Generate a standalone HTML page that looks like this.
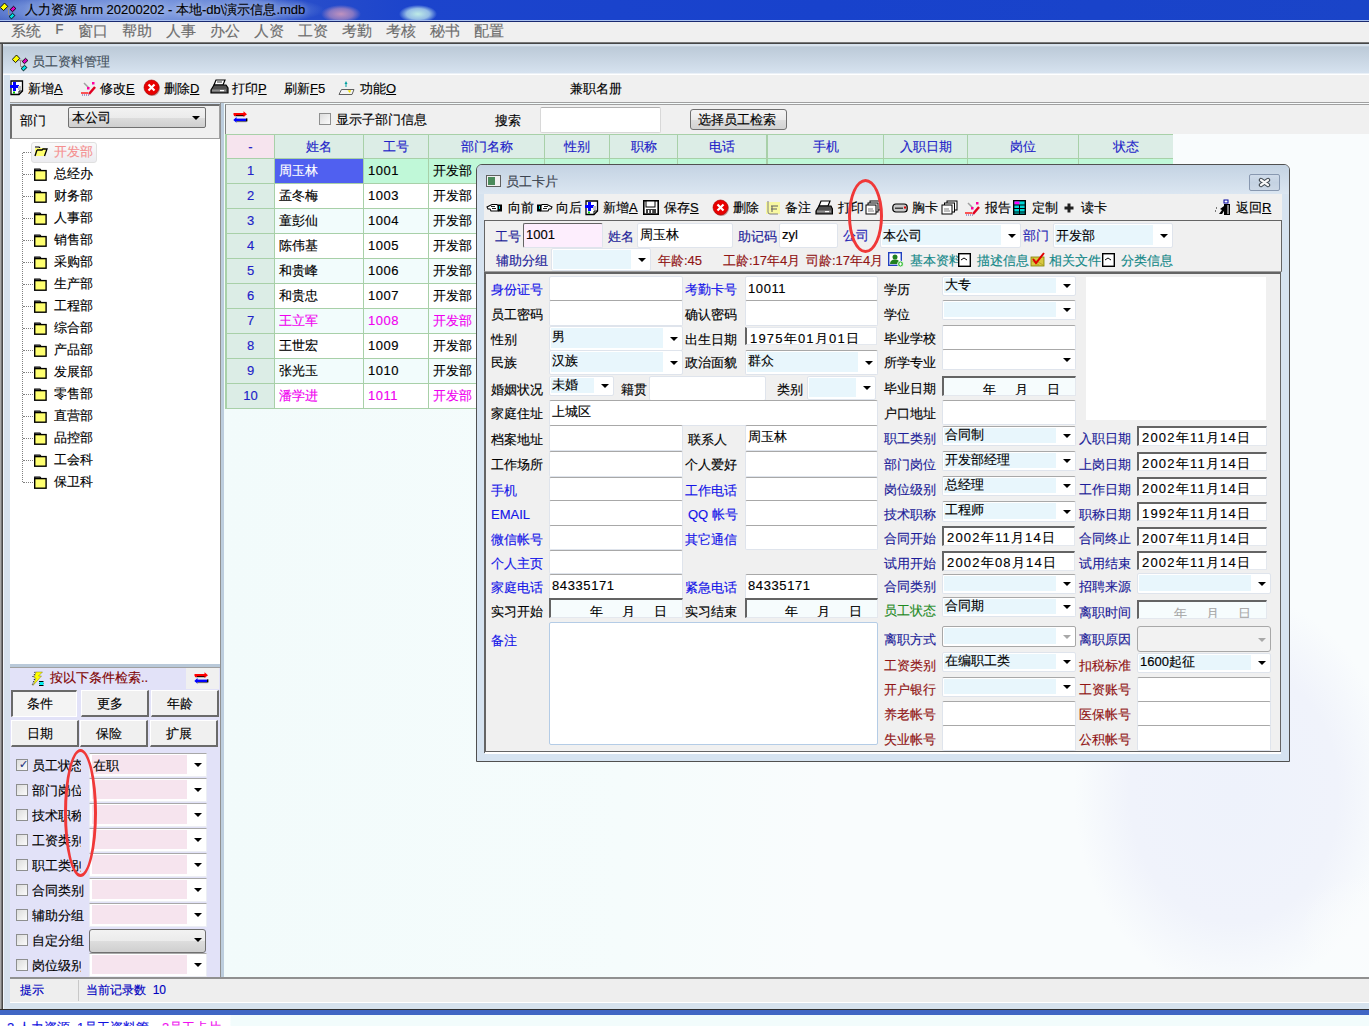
<!DOCTYPE html>
<html><head><meta charset="utf-8">
<style>
*{box-sizing:border-box}
html,body{margin:0;padding:0;width:1369px;height:1026px;overflow:hidden;background:#fff}
body{font-family:"Liberation Sans",sans-serif;font-size:13px;color:#000;position:relative;-webkit-text-stroke:0.15px}
.a{position:absolute}
.t{position:absolute;white-space:nowrap;line-height:1}
#titlebar{left:0;top:0;width:1369px;height:21px;background:radial-gradient(ellipse 20px 9px at 341px 14px,rgba(200,150,190,.95),rgba(200,150,190,.6) 60%,rgba(200,150,190,0)),radial-gradient(ellipse 19px 9px at 418px 14px,rgba(190,235,230,1),rgba(200,240,240,.7) 60%,rgba(200,240,240,0)),radial-gradient(ellipse 175px 20px at 150px 10px,rgba(150,175,230,.9) 0%,rgba(120,150,220,.75) 75%,rgba(60,90,200,0) 100%),linear-gradient(90deg,#4a68c4 0%,#1c44cc 30%,#1842cc 60%,#1a44c8 100%);border-bottom:1px solid #a8c0f0}
#tbdark{left:0;top:21px;width:1369px;height:1px;background:#1a2a70}
#menubar{left:0;top:22px;width:1369px;height:20px;background:#f0f0f0}
#menubar .t{top:1px;font-size:15px;color:#6d6d6d}
#mdiline{left:0;top:42px;width:1369px;height:3px;background:linear-gradient(#a0a0a0,#404040 40%,#505050 70%,#b0b0b0)}
#frame{left:0;top:44px;width:1369px;height:966px;background:linear-gradient(90deg,#a8a8a8 0,#a8a8a8 1px,#787878 1px,#787878 2px,#484848 2px,#484848 3px,#f0f6fc 3px,#f0f6fc 4px,#d6e2ee 4px)}
#childtitle{left:3px;top:45px;width:1366px;height:30px;background:linear-gradient(#e4ecf4 0,#bccad8 2px,#d6e2ef 28px,#ffffff 29px)}
#toolbar{left:10px;top:75px;width:1359px;height:28px;background:#f0f0f0;border-bottom:1px solid #a0a0a0}
#toolbar .t{top:7px;font-size:13px}
u{text-decoration:underline}
#leftpanel{left:10px;top:104px;width:211px;height:872px;background:#fff}
#deptbox{left:10px;top:104px;width:210px;height:35px;background:#f0f0f0;border:1px solid #fff;border-top:2px solid #6e6e6e;border-left:2px solid #6e6e6e;border-bottom:1px solid #a0a0a0;border-right:1px solid #a0a0a0}
.tree .t{font-size:13px;left:54px}
.folder{position:absolute;left:35px;width:12px;height:11px;border:1px solid #000;background:#ffff80;border-top-width:2px}
.dot{position:absolute;border-color:#808080;border-style:dotted;border-width:0}
#splitter{left:220px;top:103px;width:4px;height:874px;background:#bccddd;border-left:1px solid #909090}
#gridpanel{left:224px;top:103px;width:1145px;height:874px;background:radial-gradient(ellipse 70px 60px at 1145px 830px,rgba(250,252,253,1) 0%,rgba(250,252,253,0) 100%),radial-gradient(ellipse 160px 200px at 1010px 690px,#eef2fb 0%,#f0f3fb 65%,rgba(244,247,252,0) 100%),linear-gradient(90deg,#f2fbfb 0px,#f5fcfc 400px,#f9fcfd 600px,#f9fcfd 1145px)}
#gridtool{left:225px;top:104px;width:1144px;height:30px;background:#f0f0f0;border-top:1px solid #a0a0a0;border-left:1px solid #808080}
.grid{position:absolute;border-collapse:collapse;font-size:13px}
#statusbar{left:10px;top:977px;width:1359px;height:26px;background:#eeeeee;border-top:2px solid #909090;border-bottom:1px solid #fff}
#bottomline{left:0;top:1009px;width:1369px;height:6px;background:#4066c4;border-top:1px solid #303030}
#taskarea{left:0;top:1015px;width:1369px;height:11px;background:linear-gradient(90deg,#fff 0,#fff 230px,#f2fcfc 231px)}
</style></head><body>

<div id="titlebar" class="a"></div><div id="tbdark" class="a"></div>
<div class="t" style="left:25px;top:3px;font-size:13px;color:#000;text-shadow:0 0 6px rgba(255,255,255,.6)">人力资源 hrm 20200202 - 本地-db\演示信息.mdb</div>

<svg class="a" style="left:0px;top:0px" width="17" height="20" viewBox="0 0 17 20"><path d="M6.5 8.3 H10.5 M8.5 8.3 V14.5 H10.5" stroke="#9a9080" stroke-width="1" fill="none"/><path d="M4.5 3 L7.8 6.4 L3.5 10.6 L0.3 7.4Z" fill="#ffff00" stroke="#000" stroke-width="0.9"/><path d="M13.5 6.3 L15.9 8.5 L12.5 11.7 L10.2 9.5Z" fill="#e000c0" stroke="#000" stroke-width="0.9"/><path d="M12.5 13.3 L14.9 15.5 L11.5 18.9 L9.1 16.5Z" fill="#00e0e0" stroke="#000" stroke-width="0.9"/></svg>
<div id="menubar" class="a">
<span class="t" style="left:11px">系统</span>
<span class="t" style="left:55px;font-family:'Liberation Mono',monospace">F</span>
<span class="t" style="left:78px">窗口</span>
<span class="t" style="left:122px">帮助</span>
<span class="t" style="left:166px">人事</span>
<span class="t" style="left:210px">办公</span>
<span class="t" style="left:254px">人资</span>
<span class="t" style="left:298px">工资</span>
<span class="t" style="left:342px">考勤</span>
<span class="t" style="left:386px">考核</span>
<span class="t" style="left:430px">秘书</span>
<span class="t" style="left:474px">配置</span>
</div>
<div id="mdiline" class="a"></div>
<div id="frame" class="a"></div>
<div id="childtitle" class="a"></div>
<svg class="a" style="left:12px;top:52px" width="17" height="20" viewBox="0 0 17 20"><path d="M6.5 8.3 H10.5 M8.5 8.3 V14.5 H10.5" stroke="#9a9080" stroke-width="1" fill="none"/><path d="M4.5 3 L7.8 6.4 L3.5 10.6 L0.3 7.4Z" fill="#ffff00" stroke="#000" stroke-width="0.9"/><path d="M13.5 6.3 L15.9 8.5 L12.5 11.7 L10.2 9.5Z" fill="#e000c0" stroke="#000" stroke-width="0.9"/><path d="M12.5 13.3 L14.9 15.5 L11.5 18.9 L9.1 16.5Z" fill="#00e0e0" stroke="#000" stroke-width="0.9"/></svg>
<div class="t" style="left:32px;top:55px;font-size:13px;color:#44505c">员工资料管理</div>

<div id="toolbar" class="a">
<svg class="a" style="margin-left:-10px;margin-top:-75px;left:10px;top:80px" width="14" height="16" viewBox="0 0 14 16"><path d="M1 1 H12.5 V11 L9 14.5 H1Z" fill="#fff" stroke="#000" stroke-width="1.3"/><path d="M12.5 11 H9 V14.5" fill="none" stroke="#000" stroke-width="1"/><path d="M3 2 H6 V5 H9 V8 H6 V11 H3 V8 H0 V5 H3Z" fill="#0000ff"/><rect x="8" y="6" width="3" height="4" fill="#c0c0c0"/><rect x="3" y="11.5" width="2" height="2" fill="#00c000"/></svg>
<svg class="a" style="margin-left:-10px;margin-top:-75px;left:81px;top:81px" width="16" height="15" viewBox="0 0 16 15"><path d="M3 2 L8 7" stroke="#a0a0a0" stroke-width="1.5"/><path d="M14 6 L8 13" stroke="#e00020" stroke-width="2.5"/><rect x="11" y="1" width="2.5" height="2.5" fill="#ff00a0"/><rect x="6" y="6" width="2.5" height="2.5" fill="#ff00a0"/><path d="M0 12 H7" stroke="#ff2020" stroke-width="1.5"/><path d="M1 14 H8" stroke="#6040a0" stroke-width="1" stroke-dasharray="1 1"/></svg>
<svg class="a" style="margin-left:-10px;margin-top:-75px;left:143px;top:79px" width="18" height="18" viewBox="0 0 18 18"><circle cx="9.5" cy="9.5" r="7.5" fill="#700000" opacity=".35"/><circle cx="8.5" cy="8.5" r="7.5" fill="#e80000" stroke="#a00000" stroke-width=".6"/><path d="M5.5 5.5 L11.5 11.5 M11.5 5.5 L5.5 11.5" stroke="#fff" stroke-width="2.2"/></svg>
<svg class="a" style="margin-left:-10px;margin-top:-75px;left:210px;top:79px" width="19" height="17" viewBox="0 0 19 17"><path d="M6 1 H15 L13 6 H4Z" fill="#fff" stroke="#000" stroke-width="1.2"/><path d="M1 11 L4 6 H16 L18 9 V14 H1Z" fill="#505050" stroke="#000" stroke-width="1.2"/><rect x="2" y="10.5" width="14" height="2" fill="#909090"/><rect x="10" y="11" width="4" height="1.2" fill="#fff"/><path d="M7 3 H12" stroke="#000" stroke-width=".8"/></svg>
<svg class="a" style="margin-left:-10px;margin-top:-75px;left:338px;top:80px" width="17" height="16" viewBox="0 0 17 16"><path d="M1 14.5 L3.5 9.5 H16 L14 14.5Z" fill="#f4f4f4" stroke="#606060" stroke-width="1"/><path d="M9.5 10.5 L13 10 L12 13 Z" fill="#f0e000"/><path d="M8 1 L9.5 4 H6.5Z" fill="#00a0a0"/><rect x="7.5" y="4" width="1" height="3" fill="#00a0a0"/></svg>

<span class="t" style="left:18px">新增<u>A</u></span>
<span class="t" style="left:90px">修改<u>E</u></span>
<span class="t" style="left:154px">删除<u>D</u></span>
<span class="t" style="left:222px">打印<u>P</u></span>
<span class="t" style="left:274px">刷新<u>F</u>5</span>
<span class="t" style="left:350px">功能<u>O</u></span>
<span class="t" style="left:560px">兼职名册</span>
</div>

<div id="leftpanel" class="a"></div>
<div id="deptbox" class="a"></div>
<div class="a" style="left:12px;top:106px;width:206px;height:32px;background:#f0f0f0"></div>
<span class="t" style="left:20px;top:114px;font-size:13px">部门</span>
<div class="a" style="left:68px;top:107px;width:138px;height:21px;border:1px solid #707070;border-radius:2px;background:linear-gradient(#f2f2f2,#ebebeb 50%,#dddddd 51%,#cfcfcf)"></div>
<span class="t" style="left:72px;top:111px;font-size:13px">本公司</span>
<div class="a" style="left:192px;top:116px;width:0;height:0;border-left:4px solid transparent;border-right:4px solid transparent;border-top:4px solid #000"></div>
<div class="dot" style="left:22px;top:153px;width:1px;height:329px;border-left-width:1px"></div>
<div class="dot" style="left:23px;top:152px;width:10px;height:1px;border-top-width:1px"></div>
<div class="a" style="left:31px;top:142px;width:66px;height:21px;border:1px solid #e0e0e0;border-radius:3px;background:linear-gradient(#fafafa,#ececf0)"></div>
<svg class="a" style="left:34px;top:146px" width="14" height="11" viewBox="0 0 14 11"><path d="M1 1 H5 L6 2" fill="none" stroke="#000" stroke-width="1.2"/><rect x="1" y="2" width="10" height="8" fill="#ffff70"/><path d="M3 4 H8 L9 3 H13 L10.5 10" fill="#ffff70" stroke="#000" stroke-width="1.3"/><path d="M3 4 L1 10" fill="none" stroke="#000" stroke-width="1.3"/></svg>
<span class="t" style="left:54px;top:145px;font-size:13px;color:#f49090">开发部</span>
<div class="dot" style="left:23px;top:174px;width:10px;height:1px;border-top-width:1px"></div>
<svg class="a" style="left:34px;top:168px" width="13" height="13" viewBox="0 0 13 13"><path d="M0.7 3 V1.2 H6 L7 2.3" fill="#fff" stroke="#000" stroke-width="1.2"/><rect x="0.7" y="2.6" width="11.4" height="9.6" fill="#ffff70" stroke="#000" stroke-width="1.4"/></svg>
<span class="t" style="left:54px;top:167px;font-size:13px">总经办</span>
<div class="dot" style="left:23px;top:196px;width:10px;height:1px;border-top-width:1px"></div>
<svg class="a" style="left:34px;top:190px" width="13" height="13" viewBox="0 0 13 13"><path d="M0.7 3 V1.2 H6 L7 2.3" fill="#fff" stroke="#000" stroke-width="1.2"/><rect x="0.7" y="2.6" width="11.4" height="9.6" fill="#ffff70" stroke="#000" stroke-width="1.4"/></svg>
<span class="t" style="left:54px;top:189px;font-size:13px">财务部</span>
<div class="dot" style="left:23px;top:218px;width:10px;height:1px;border-top-width:1px"></div>
<svg class="a" style="left:34px;top:212px" width="13" height="13" viewBox="0 0 13 13"><path d="M0.7 3 V1.2 H6 L7 2.3" fill="#fff" stroke="#000" stroke-width="1.2"/><rect x="0.7" y="2.6" width="11.4" height="9.6" fill="#ffff70" stroke="#000" stroke-width="1.4"/></svg>
<span class="t" style="left:54px;top:211px;font-size:13px">人事部</span>
<div class="dot" style="left:23px;top:240px;width:10px;height:1px;border-top-width:1px"></div>
<svg class="a" style="left:34px;top:234px" width="13" height="13" viewBox="0 0 13 13"><path d="M0.7 3 V1.2 H6 L7 2.3" fill="#fff" stroke="#000" stroke-width="1.2"/><rect x="0.7" y="2.6" width="11.4" height="9.6" fill="#ffff70" stroke="#000" stroke-width="1.4"/></svg>
<span class="t" style="left:54px;top:233px;font-size:13px">销售部</span>
<div class="dot" style="left:23px;top:262px;width:10px;height:1px;border-top-width:1px"></div>
<svg class="a" style="left:34px;top:256px" width="13" height="13" viewBox="0 0 13 13"><path d="M0.7 3 V1.2 H6 L7 2.3" fill="#fff" stroke="#000" stroke-width="1.2"/><rect x="0.7" y="2.6" width="11.4" height="9.6" fill="#ffff70" stroke="#000" stroke-width="1.4"/></svg>
<span class="t" style="left:54px;top:255px;font-size:13px">采购部</span>
<div class="dot" style="left:23px;top:284px;width:10px;height:1px;border-top-width:1px"></div>
<svg class="a" style="left:34px;top:278px" width="13" height="13" viewBox="0 0 13 13"><path d="M0.7 3 V1.2 H6 L7 2.3" fill="#fff" stroke="#000" stroke-width="1.2"/><rect x="0.7" y="2.6" width="11.4" height="9.6" fill="#ffff70" stroke="#000" stroke-width="1.4"/></svg>
<span class="t" style="left:54px;top:277px;font-size:13px">生产部</span>
<div class="dot" style="left:23px;top:306px;width:10px;height:1px;border-top-width:1px"></div>
<svg class="a" style="left:34px;top:300px" width="13" height="13" viewBox="0 0 13 13"><path d="M0.7 3 V1.2 H6 L7 2.3" fill="#fff" stroke="#000" stroke-width="1.2"/><rect x="0.7" y="2.6" width="11.4" height="9.6" fill="#ffff70" stroke="#000" stroke-width="1.4"/></svg>
<span class="t" style="left:54px;top:299px;font-size:13px">工程部</span>
<div class="dot" style="left:23px;top:328px;width:10px;height:1px;border-top-width:1px"></div>
<svg class="a" style="left:34px;top:322px" width="13" height="13" viewBox="0 0 13 13"><path d="M0.7 3 V1.2 H6 L7 2.3" fill="#fff" stroke="#000" stroke-width="1.2"/><rect x="0.7" y="2.6" width="11.4" height="9.6" fill="#ffff70" stroke="#000" stroke-width="1.4"/></svg>
<span class="t" style="left:54px;top:321px;font-size:13px">综合部</span>
<div class="dot" style="left:23px;top:350px;width:10px;height:1px;border-top-width:1px"></div>
<svg class="a" style="left:34px;top:344px" width="13" height="13" viewBox="0 0 13 13"><path d="M0.7 3 V1.2 H6 L7 2.3" fill="#fff" stroke="#000" stroke-width="1.2"/><rect x="0.7" y="2.6" width="11.4" height="9.6" fill="#ffff70" stroke="#000" stroke-width="1.4"/></svg>
<span class="t" style="left:54px;top:343px;font-size:13px">产品部</span>
<div class="dot" style="left:23px;top:372px;width:10px;height:1px;border-top-width:1px"></div>
<svg class="a" style="left:34px;top:366px" width="13" height="13" viewBox="0 0 13 13"><path d="M0.7 3 V1.2 H6 L7 2.3" fill="#fff" stroke="#000" stroke-width="1.2"/><rect x="0.7" y="2.6" width="11.4" height="9.6" fill="#ffff70" stroke="#000" stroke-width="1.4"/></svg>
<span class="t" style="left:54px;top:365px;font-size:13px">发展部</span>
<div class="dot" style="left:23px;top:394px;width:10px;height:1px;border-top-width:1px"></div>
<svg class="a" style="left:34px;top:388px" width="13" height="13" viewBox="0 0 13 13"><path d="M0.7 3 V1.2 H6 L7 2.3" fill="#fff" stroke="#000" stroke-width="1.2"/><rect x="0.7" y="2.6" width="11.4" height="9.6" fill="#ffff70" stroke="#000" stroke-width="1.4"/></svg>
<span class="t" style="left:54px;top:387px;font-size:13px">零售部</span>
<div class="dot" style="left:23px;top:416px;width:10px;height:1px;border-top-width:1px"></div>
<svg class="a" style="left:34px;top:410px" width="13" height="13" viewBox="0 0 13 13"><path d="M0.7 3 V1.2 H6 L7 2.3" fill="#fff" stroke="#000" stroke-width="1.2"/><rect x="0.7" y="2.6" width="11.4" height="9.6" fill="#ffff70" stroke="#000" stroke-width="1.4"/></svg>
<span class="t" style="left:54px;top:409px;font-size:13px">直营部</span>
<div class="dot" style="left:23px;top:438px;width:10px;height:1px;border-top-width:1px"></div>
<svg class="a" style="left:34px;top:432px" width="13" height="13" viewBox="0 0 13 13"><path d="M0.7 3 V1.2 H6 L7 2.3" fill="#fff" stroke="#000" stroke-width="1.2"/><rect x="0.7" y="2.6" width="11.4" height="9.6" fill="#ffff70" stroke="#000" stroke-width="1.4"/></svg>
<span class="t" style="left:54px;top:431px;font-size:13px">品控部</span>
<div class="dot" style="left:23px;top:460px;width:10px;height:1px;border-top-width:1px"></div>
<svg class="a" style="left:34px;top:454px" width="13" height="13" viewBox="0 0 13 13"><path d="M0.7 3 V1.2 H6 L7 2.3" fill="#fff" stroke="#000" stroke-width="1.2"/><rect x="0.7" y="2.6" width="11.4" height="9.6" fill="#ffff70" stroke="#000" stroke-width="1.4"/></svg>
<span class="t" style="left:54px;top:453px;font-size:13px">工会科</span>
<div class="dot" style="left:23px;top:482px;width:10px;height:1px;border-top-width:1px"></div>
<svg class="a" style="left:34px;top:476px" width="13" height="13" viewBox="0 0 13 13"><path d="M0.7 3 V1.2 H6 L7 2.3" fill="#fff" stroke="#000" stroke-width="1.2"/><rect x="0.7" y="2.6" width="11.4" height="9.6" fill="#ffff70" stroke="#000" stroke-width="1.4"/></svg>
<span class="t" style="left:54px;top:475px;font-size:13px">保卫科</span>
<div class="a" style="left:10px;top:664px;width:210px;height:4px;background:#b9c9d9"></div>
<div class="a" style="left:10px;top:667px;width:210px;height:310px;background:#e2e2f8;border-top:1px solid #a0a0a0"></div>
<div class="a" style="left:186px;top:668px;width:33px;height:21px;background:#f0f0f0"></div>
<span class="t" style="left:50px;top:671px;font-size:13px;color:#800000">按以下条件检索..</span>
<svg class="a" style="left:31px;top:671px" width="14" height="16" viewBox="0 0 14 16"><path d="M5 1 H11.5 L7.5 5 L10.5 5 L2 14.5 L5 7 L3 7Z" fill="#ffff00" stroke="#606000" stroke-width=".4"/><path d="M4 0.8 L3 5 M1.5 5.5 H4 M3.5 8 L1 14.5" stroke="#000" stroke-width="1" stroke-dasharray="1 1.5"/><path d="M8 10.5 H12.5 M8 12.5 H12.5" stroke="#000" stroke-width="1"/><rect x="8.5" y="11" width="4" height="3.5" fill="#00f0f0"/><path d="M8 14.5 H12.5" stroke="#000" stroke-width="1"/></svg>
<svg class="a" style="left:194px;top:672px" width="15" height="12" viewBox="0 0 15 12"><rect x="1.5" y="4" width="10" height="1.2" fill="#000"/><rect x="0.5" y="2" width="11" height="2.2" fill="#ff0000"/><path d="M10.5 0.3 L14 3.2 L10.5 6Z" fill="#ff0000"/><rect x="1" y="2" width="2" height="3" fill="#ff0000"/><rect x="3" y="7.6" width="10.5" height="2.6" fill="#0000ff"/><path d="M0.3 8.9 L3.5 6 V11.8Z" fill="#0000ff"/><rect x="13" y="7.4" width="1.4" height="3" fill="#000"/><rect x="3.5" y="10.2" width="10" height="0.9" fill="#555"/></svg>
<div class="a" style="left:11px;top:690px;width:66px;height:27px;background:#f4f4f4;border-top:2px solid #6a6a6a;border-left:2px solid #6a6a6a;border-bottom:1px solid #fff;border-right:1px solid #fff"></div>
<span class="t" style="left:6px;top:697px;width:68px;text-align:center;font-size:13px">条件</span>
<div class="a" style="left:81px;top:690px;width:68px;height:27px;background:#f0f0f0;border-top:1px solid #fff;border-left:1px solid #fff;border-bottom:2px solid #6a6a6a;border-right:2px solid #6a6a6a"></div>
<span class="t" style="left:76px;top:697px;width:68px;text-align:center;font-size:13px">更多</span>
<div class="a" style="left:151px;top:690px;width:68px;height:27px;background:#f0f0f0;border-top:1px solid #fff;border-left:1px solid #fff;border-bottom:2px solid #6a6a6a;border-right:2px solid #6a6a6a"></div>
<span class="t" style="left:146px;top:697px;width:68px;text-align:center;font-size:13px">年龄</span>
<div class="a" style="left:11px;top:720px;width:68px;height:27px;background:#f0f0f0;border-top:1px solid #fff;border-left:1px solid #fff;border-bottom:2px solid #6a6a6a;border-right:2px solid #6a6a6a"></div>
<span class="t" style="left:6px;top:727px;width:68px;text-align:center;font-size:13px">日期</span>
<div class="a" style="left:80px;top:720px;width:68px;height:27px;background:#f0f0f0;border-top:1px solid #fff;border-left:1px solid #fff;border-bottom:2px solid #6a6a6a;border-right:2px solid #6a6a6a"></div>
<span class="t" style="left:75px;top:727px;width:68px;text-align:center;font-size:13px">保险</span>
<div class="a" style="left:150px;top:720px;width:68px;height:27px;background:#f0f0f0;border-top:1px solid #fff;border-left:1px solid #fff;border-bottom:2px solid #6a6a6a;border-right:2px solid #6a6a6a"></div>
<span class="t" style="left:145px;top:727px;width:68px;text-align:center;font-size:13px">扩展</span>
<div class="a" style="left:16px;top:759px;width:12px;height:12px;border:1px solid #8e8f8f;background:linear-gradient(135deg,#dcdcdc,#fbfbfb)"><span class="t" style="left:2px;top:-1px;font-size:11px;color:#203080">✓</span></div>
<span class="t" style="left:32px;top:759px;font-size:13px;width:49px;overflow:hidden">员工状态</span>
<div class="a" style="left:89px;top:753px;width:118px;height:24px;background:#fff;border:1px solid #eceef4;border-top-color:#a8a8a8"></div>
<div class="a" style="left:92px;top:755px;width:95px;height:19px;background:#f6e4ee"></div>
<div class="a" style="left:194px;top:763px;width:0;height:0;border-left:4px solid transparent;border-right:4px solid transparent;border-top:4px solid #000"></div>
<span class="t" style="left:93px;top:759px;font-size:13px">在职</span>
<div class="a" style="left:16px;top:784px;width:12px;height:12px;border:1px solid #8e8f8f;background:linear-gradient(135deg,#dcdcdc,#fbfbfb)"></div>
<span class="t" style="left:32px;top:784px;font-size:13px;width:49px;overflow:hidden">部门岗位</span>
<div class="a" style="left:89px;top:778px;width:118px;height:24px;background:#fff;border:1px solid #eceef4;border-top-color:#a8a8a8"></div>
<div class="a" style="left:92px;top:780px;width:95px;height:19px;background:#f6e4ee"></div>
<div class="a" style="left:194px;top:788px;width:0;height:0;border-left:4px solid transparent;border-right:4px solid transparent;border-top:4px solid #000"></div>
<div class="a" style="left:16px;top:809px;width:12px;height:12px;border:1px solid #8e8f8f;background:linear-gradient(135deg,#dcdcdc,#fbfbfb)"></div>
<span class="t" style="left:32px;top:809px;font-size:13px;width:49px;overflow:hidden">技术职称</span>
<div class="a" style="left:89px;top:803px;width:118px;height:24px;background:#fff;border:1px solid #eceef4;border-top-color:#a8a8a8"></div>
<div class="a" style="left:92px;top:805px;width:95px;height:19px;background:#f6e4ee"></div>
<div class="a" style="left:194px;top:813px;width:0;height:0;border-left:4px solid transparent;border-right:4px solid transparent;border-top:4px solid #000"></div>
<div class="a" style="left:16px;top:834px;width:12px;height:12px;border:1px solid #8e8f8f;background:linear-gradient(135deg,#dcdcdc,#fbfbfb)"></div>
<span class="t" style="left:32px;top:834px;font-size:13px;width:49px;overflow:hidden">工资类别</span>
<div class="a" style="left:89px;top:828px;width:118px;height:24px;background:#fff;border:1px solid #eceef4;border-top-color:#a8a8a8"></div>
<div class="a" style="left:92px;top:830px;width:95px;height:19px;background:#f6e4ee"></div>
<div class="a" style="left:194px;top:838px;width:0;height:0;border-left:4px solid transparent;border-right:4px solid transparent;border-top:4px solid #000"></div>
<div class="a" style="left:16px;top:859px;width:12px;height:12px;border:1px solid #8e8f8f;background:linear-gradient(135deg,#dcdcdc,#fbfbfb)"></div>
<span class="t" style="left:32px;top:859px;font-size:13px;width:49px;overflow:hidden">职工类别</span>
<div class="a" style="left:89px;top:853px;width:118px;height:24px;background:#fff;border:1px solid #eceef4;border-top-color:#a8a8a8"></div>
<div class="a" style="left:92px;top:855px;width:95px;height:19px;background:#f6e4ee"></div>
<div class="a" style="left:194px;top:863px;width:0;height:0;border-left:4px solid transparent;border-right:4px solid transparent;border-top:4px solid #000"></div>
<div class="a" style="left:16px;top:884px;width:12px;height:12px;border:1px solid #8e8f8f;background:linear-gradient(135deg,#dcdcdc,#fbfbfb)"></div>
<span class="t" style="left:32px;top:884px;font-size:13px;width:56px;overflow:hidden">合同类别</span>
<div class="a" style="left:89px;top:878px;width:118px;height:24px;background:#fff;border:1px solid #eceef4;border-top-color:#a8a8a8"></div>
<div class="a" style="left:92px;top:880px;width:95px;height:19px;background:#f6e4ee"></div>
<div class="a" style="left:194px;top:888px;width:0;height:0;border-left:4px solid transparent;border-right:4px solid transparent;border-top:4px solid #000"></div>
<div class="a" style="left:16px;top:909px;width:12px;height:12px;border:1px solid #8e8f8f;background:linear-gradient(135deg,#dcdcdc,#fbfbfb)"></div>
<span class="t" style="left:32px;top:909px;font-size:13px;width:56px;overflow:hidden">辅助分组</span>
<div class="a" style="left:89px;top:903px;width:118px;height:24px;background:#fff;border:1px solid #eceef4;border-top-color:#a8a8a8"></div>
<div class="a" style="left:92px;top:905px;width:95px;height:19px;background:#f6e4ee"></div>
<div class="a" style="left:194px;top:913px;width:0;height:0;border-left:4px solid transparent;border-right:4px solid transparent;border-top:4px solid #000"></div>
<div class="a" style="left:16px;top:934px;width:12px;height:12px;border:1px solid #8e8f8f;background:linear-gradient(135deg,#dcdcdc,#fbfbfb)"></div>
<span class="t" style="left:32px;top:934px;font-size:13px;width:56px;overflow:hidden">自定分组</span>
<div class="a" style="left:89px;top:929px;width:117px;height:24px;border:1px solid #707070;border-radius:3px;background:linear-gradient(#f2f2f2,#ebebeb 50%,#dddddd 51%,#cfcfcf)"></div>
<div class="a" style="left:194px;top:938px;width:0;height:0;border-left:4px solid transparent;border-right:4px solid transparent;border-top:4px solid #000"></div>
<div class="a" style="left:16px;top:959px;width:12px;height:12px;border:1px solid #8e8f8f;background:linear-gradient(135deg,#dcdcdc,#fbfbfb)"></div>
<span class="t" style="left:32px;top:959px;font-size:13px;width:49px;overflow:hidden">岗位级别</span>
<div class="a" style="left:89px;top:953px;width:118px;height:24px;background:#fff;border:1px solid #eceef4;border-top-color:#a8a8a8"></div>
<div class="a" style="left:92px;top:955px;width:95px;height:19px;background:#f6e4ee"></div>
<div class="a" style="left:194px;top:963px;width:0;height:0;border-left:4px solid transparent;border-right:4px solid transparent;border-top:4px solid #000"></div>

<div id="splitter" class="a"></div>
<div id="gridpanel" class="a"></div>
<div id="gridtool" class="a"></div>

<svg class="a" style="left:233px;top:111px" width="15" height="12" viewBox="0 0 15 12"><rect x="1.5" y="4" width="10" height="1.2" fill="#000"/><rect x="0.5" y="2" width="11" height="2.2" fill="#ff0000"/><path d="M10.5 0.3 L14 3.2 L10.5 6Z" fill="#ff0000"/><rect x="1" y="2" width="2" height="3" fill="#ff0000"/><rect x="3" y="7.6" width="10.5" height="2.6" fill="#0000ff"/><path d="M0.3 8.9 L3.5 6 V11.8Z" fill="#0000ff"/><rect x="13" y="7.4" width="1.4" height="3" fill="#000"/><rect x="3.5" y="10.2" width="10" height="0.9" fill="#555"/></svg>
<div class="a" style="left:319px;top:113px;width:12px;height:12px;border:1px solid #8e8f8f;background:linear-gradient(135deg,#dcdcdc,#fbfbfb)"></div>
<span class="t" style="left:336px;top:113px;font-size:13px">显示子部门信息</span>
<span class="t" style="left:495px;top:114px;font-size:13px">搜索</span>
<div class="a" style="left:540px;top:107px;width:121px;height:26px;background:#fff;border:1px solid #d8d8d8;border-top-color:#b0b0b0;border-radius:2px"></div>
<div class="a" style="left:690px;top:109px;width:97px;height:21px;border:1px solid #707070;border-radius:3px;background:linear-gradient(#f4f4f4,#ebebeb 50%,#dedede 51%,#d2d2d2)"></div>
<span class="t" style="left:698px;top:113px;font-size:13px">选择员工检索</span>
<div class="a" style="left:225px;top:134px;width:948px;height:275px;background:#a8d0a8"></div>
<div class="a" style="left:227px;top:135px;width:47px;height:23px;background:#f6e4ee;color:#2222c8;text-align:center;line-height:23px;font-size:13px">-</div>
<div class="a" style="left:275px;top:135px;width:88px;height:23px;background:#dcede6;color:#2222c8;text-align:center;line-height:23px;font-size:13px">姓名</div>
<div class="a" style="left:364px;top:135px;width:64px;height:23px;background:#dcede6;color:#2222c8;text-align:center;line-height:23px;font-size:13px">工号</div>
<div class="a" style="left:429px;top:135px;width:115px;height:23px;background:#dcede6;color:#2222c8;text-align:center;line-height:23px;font-size:13px">部门名称</div>
<div class="a" style="left:545px;top:135px;width:64px;height:23px;background:#dcede6;color:#2222c8;text-align:center;line-height:23px;font-size:13px">性别</div>
<div class="a" style="left:610px;top:135px;width:67px;height:23px;background:#dcede6;color:#2222c8;text-align:center;line-height:23px;font-size:13px">职称</div>
<div class="a" style="left:678px;top:135px;width:88px;height:23px;background:#dcede6;color:#2222c8;text-align:center;line-height:23px;font-size:13px">电话</div>
<div class="a" style="left:768px;top:135px;width:115px;height:23px;background:#dcede6;color:#2222c8;text-align:center;line-height:23px;font-size:13px">手机</div>
<div class="a" style="left:884px;top:135px;width:83px;height:23px;background:#dcede6;color:#2222c8;text-align:center;line-height:23px;font-size:13px">入职日期</div>
<div class="a" style="left:968px;top:135px;width:110px;height:23px;background:#dcede6;color:#2222c8;text-align:center;line-height:23px;font-size:13px">岗位</div>
<div class="a" style="left:1079px;top:135px;width:94px;height:23px;background:#dcede6;color:#2222c8;text-align:center;line-height:23px;font-size:13px">状态</div>
<div class="a" style="left:227px;top:159px;width:47px;height:24px;background:#dcede6;color:#2222c8;text-align:center;padding-left:0px;line-height:24px;font-size:13px;overflow:hidden;white-space:nowrap">1</div>
<div class="a" style="left:275px;top:159px;width:88px;height:24px;background:#5060f0;color:#fff;text-align:left;padding-left:4px;line-height:24px;font-size:13px;overflow:hidden;white-space:nowrap">周玉林</div>
<div class="a" style="left:364px;top:159px;width:64px;height:24px;background:#c0f8d8;color:#000;text-align:left;padding-left:4px;line-height:24px;font-size:13px;overflow:hidden;white-space:nowrap"><span style="letter-spacing:0.5px">1001</span></div>
<div class="a" style="left:429px;top:159px;width:115px;height:24px;background:#c0f8d8;color:#000;text-align:left;padding-left:4px;line-height:24px;font-size:13px;overflow:hidden;white-space:nowrap">开发部</div>
<div class="a" style="left:545px;top:159px;width:64px;height:24px;background:#c0f8d8;color:#000;text-align:left;padding-left:4px;line-height:24px;font-size:13px;overflow:hidden;white-space:nowrap"></div>
<div class="a" style="left:610px;top:159px;width:67px;height:24px;background:#c0f8d8;color:#000;text-align:left;padding-left:4px;line-height:24px;font-size:13px;overflow:hidden;white-space:nowrap"></div>
<div class="a" style="left:678px;top:159px;width:88px;height:24px;background:#c0f8d8;color:#000;text-align:left;padding-left:4px;line-height:24px;font-size:13px;overflow:hidden;white-space:nowrap"></div>
<div class="a" style="left:768px;top:159px;width:115px;height:24px;background:#c0f8d8;color:#000;text-align:left;padding-left:4px;line-height:24px;font-size:13px;overflow:hidden;white-space:nowrap"></div>
<div class="a" style="left:884px;top:159px;width:83px;height:24px;background:#c0f8d8;color:#000;text-align:left;padding-left:4px;line-height:24px;font-size:13px;overflow:hidden;white-space:nowrap"></div>
<div class="a" style="left:968px;top:159px;width:110px;height:24px;background:#c0f8d8;color:#000;text-align:left;padding-left:4px;line-height:24px;font-size:13px;overflow:hidden;white-space:nowrap"></div>
<div class="a" style="left:1079px;top:159px;width:94px;height:24px;background:#c0f8d8;color:#000;text-align:left;padding-left:4px;line-height:24px;font-size:13px;overflow:hidden;white-space:nowrap"></div>
<div class="a" style="left:227px;top:184px;width:47px;height:24px;background:#dcede6;color:#2222c8;text-align:center;padding-left:0px;line-height:24px;font-size:13px;overflow:hidden;white-space:nowrap">2</div>
<div class="a" style="left:275px;top:184px;width:88px;height:24px;background:#ffffff;color:#000;text-align:left;padding-left:4px;line-height:24px;font-size:13px;overflow:hidden;white-space:nowrap">孟冬梅</div>
<div class="a" style="left:364px;top:184px;width:64px;height:24px;background:#ffffff;color:#000;text-align:left;padding-left:4px;line-height:24px;font-size:13px;overflow:hidden;white-space:nowrap"><span style="letter-spacing:0.5px">1003</span></div>
<div class="a" style="left:429px;top:184px;width:115px;height:24px;background:#ffffff;color:#000;text-align:left;padding-left:4px;line-height:24px;font-size:13px;overflow:hidden;white-space:nowrap">开发部</div>
<div class="a" style="left:545px;top:184px;width:64px;height:24px;background:#ffffff;color:#000;text-align:left;padding-left:4px;line-height:24px;font-size:13px;overflow:hidden;white-space:nowrap"></div>
<div class="a" style="left:610px;top:184px;width:67px;height:24px;background:#ffffff;color:#000;text-align:left;padding-left:4px;line-height:24px;font-size:13px;overflow:hidden;white-space:nowrap"></div>
<div class="a" style="left:678px;top:184px;width:88px;height:24px;background:#ffffff;color:#000;text-align:left;padding-left:4px;line-height:24px;font-size:13px;overflow:hidden;white-space:nowrap"></div>
<div class="a" style="left:768px;top:184px;width:115px;height:24px;background:#ffffff;color:#000;text-align:left;padding-left:4px;line-height:24px;font-size:13px;overflow:hidden;white-space:nowrap"></div>
<div class="a" style="left:884px;top:184px;width:83px;height:24px;background:#ffffff;color:#000;text-align:left;padding-left:4px;line-height:24px;font-size:13px;overflow:hidden;white-space:nowrap"></div>
<div class="a" style="left:968px;top:184px;width:110px;height:24px;background:#ffffff;color:#000;text-align:left;padding-left:4px;line-height:24px;font-size:13px;overflow:hidden;white-space:nowrap"></div>
<div class="a" style="left:1079px;top:184px;width:94px;height:24px;background:#ffffff;color:#000;text-align:left;padding-left:4px;line-height:24px;font-size:13px;overflow:hidden;white-space:nowrap"></div>
<div class="a" style="left:227px;top:209px;width:47px;height:24px;background:#dcede6;color:#2222c8;text-align:center;padding-left:0px;line-height:24px;font-size:13px;overflow:hidden;white-space:nowrap">3</div>
<div class="a" style="left:275px;top:209px;width:88px;height:24px;background:#f2fcfc;color:#000;text-align:left;padding-left:4px;line-height:24px;font-size:13px;overflow:hidden;white-space:nowrap">童彭仙</div>
<div class="a" style="left:364px;top:209px;width:64px;height:24px;background:#f2fcfc;color:#000;text-align:left;padding-left:4px;line-height:24px;font-size:13px;overflow:hidden;white-space:nowrap"><span style="letter-spacing:0.5px">1004</span></div>
<div class="a" style="left:429px;top:209px;width:115px;height:24px;background:#f2fcfc;color:#000;text-align:left;padding-left:4px;line-height:24px;font-size:13px;overflow:hidden;white-space:nowrap">开发部</div>
<div class="a" style="left:545px;top:209px;width:64px;height:24px;background:#f2fcfc;color:#000;text-align:left;padding-left:4px;line-height:24px;font-size:13px;overflow:hidden;white-space:nowrap"></div>
<div class="a" style="left:610px;top:209px;width:67px;height:24px;background:#f2fcfc;color:#000;text-align:left;padding-left:4px;line-height:24px;font-size:13px;overflow:hidden;white-space:nowrap"></div>
<div class="a" style="left:678px;top:209px;width:88px;height:24px;background:#f2fcfc;color:#000;text-align:left;padding-left:4px;line-height:24px;font-size:13px;overflow:hidden;white-space:nowrap"></div>
<div class="a" style="left:768px;top:209px;width:115px;height:24px;background:#f2fcfc;color:#000;text-align:left;padding-left:4px;line-height:24px;font-size:13px;overflow:hidden;white-space:nowrap"></div>
<div class="a" style="left:884px;top:209px;width:83px;height:24px;background:#f2fcfc;color:#000;text-align:left;padding-left:4px;line-height:24px;font-size:13px;overflow:hidden;white-space:nowrap"></div>
<div class="a" style="left:968px;top:209px;width:110px;height:24px;background:#f2fcfc;color:#000;text-align:left;padding-left:4px;line-height:24px;font-size:13px;overflow:hidden;white-space:nowrap"></div>
<div class="a" style="left:1079px;top:209px;width:94px;height:24px;background:#f2fcfc;color:#000;text-align:left;padding-left:4px;line-height:24px;font-size:13px;overflow:hidden;white-space:nowrap"></div>
<div class="a" style="left:227px;top:234px;width:47px;height:24px;background:#dcede6;color:#2222c8;text-align:center;padding-left:0px;line-height:24px;font-size:13px;overflow:hidden;white-space:nowrap">4</div>
<div class="a" style="left:275px;top:234px;width:88px;height:24px;background:#ffffff;color:#000;text-align:left;padding-left:4px;line-height:24px;font-size:13px;overflow:hidden;white-space:nowrap">陈伟基</div>
<div class="a" style="left:364px;top:234px;width:64px;height:24px;background:#ffffff;color:#000;text-align:left;padding-left:4px;line-height:24px;font-size:13px;overflow:hidden;white-space:nowrap"><span style="letter-spacing:0.5px">1005</span></div>
<div class="a" style="left:429px;top:234px;width:115px;height:24px;background:#ffffff;color:#000;text-align:left;padding-left:4px;line-height:24px;font-size:13px;overflow:hidden;white-space:nowrap">开发部</div>
<div class="a" style="left:545px;top:234px;width:64px;height:24px;background:#ffffff;color:#000;text-align:left;padding-left:4px;line-height:24px;font-size:13px;overflow:hidden;white-space:nowrap"></div>
<div class="a" style="left:610px;top:234px;width:67px;height:24px;background:#ffffff;color:#000;text-align:left;padding-left:4px;line-height:24px;font-size:13px;overflow:hidden;white-space:nowrap"></div>
<div class="a" style="left:678px;top:234px;width:88px;height:24px;background:#ffffff;color:#000;text-align:left;padding-left:4px;line-height:24px;font-size:13px;overflow:hidden;white-space:nowrap"></div>
<div class="a" style="left:768px;top:234px;width:115px;height:24px;background:#ffffff;color:#000;text-align:left;padding-left:4px;line-height:24px;font-size:13px;overflow:hidden;white-space:nowrap"></div>
<div class="a" style="left:884px;top:234px;width:83px;height:24px;background:#ffffff;color:#000;text-align:left;padding-left:4px;line-height:24px;font-size:13px;overflow:hidden;white-space:nowrap"></div>
<div class="a" style="left:968px;top:234px;width:110px;height:24px;background:#ffffff;color:#000;text-align:left;padding-left:4px;line-height:24px;font-size:13px;overflow:hidden;white-space:nowrap"></div>
<div class="a" style="left:1079px;top:234px;width:94px;height:24px;background:#ffffff;color:#000;text-align:left;padding-left:4px;line-height:24px;font-size:13px;overflow:hidden;white-space:nowrap"></div>
<div class="a" style="left:227px;top:259px;width:47px;height:24px;background:#dcede6;color:#2222c8;text-align:center;padding-left:0px;line-height:24px;font-size:13px;overflow:hidden;white-space:nowrap">5</div>
<div class="a" style="left:275px;top:259px;width:88px;height:24px;background:#f2fcfc;color:#000;text-align:left;padding-left:4px;line-height:24px;font-size:13px;overflow:hidden;white-space:nowrap">和贵峰</div>
<div class="a" style="left:364px;top:259px;width:64px;height:24px;background:#f2fcfc;color:#000;text-align:left;padding-left:4px;line-height:24px;font-size:13px;overflow:hidden;white-space:nowrap"><span style="letter-spacing:0.5px">1006</span></div>
<div class="a" style="left:429px;top:259px;width:115px;height:24px;background:#f2fcfc;color:#000;text-align:left;padding-left:4px;line-height:24px;font-size:13px;overflow:hidden;white-space:nowrap">开发部</div>
<div class="a" style="left:545px;top:259px;width:64px;height:24px;background:#f2fcfc;color:#000;text-align:left;padding-left:4px;line-height:24px;font-size:13px;overflow:hidden;white-space:nowrap"></div>
<div class="a" style="left:610px;top:259px;width:67px;height:24px;background:#f2fcfc;color:#000;text-align:left;padding-left:4px;line-height:24px;font-size:13px;overflow:hidden;white-space:nowrap"></div>
<div class="a" style="left:678px;top:259px;width:88px;height:24px;background:#f2fcfc;color:#000;text-align:left;padding-left:4px;line-height:24px;font-size:13px;overflow:hidden;white-space:nowrap"></div>
<div class="a" style="left:768px;top:259px;width:115px;height:24px;background:#f2fcfc;color:#000;text-align:left;padding-left:4px;line-height:24px;font-size:13px;overflow:hidden;white-space:nowrap"></div>
<div class="a" style="left:884px;top:259px;width:83px;height:24px;background:#f2fcfc;color:#000;text-align:left;padding-left:4px;line-height:24px;font-size:13px;overflow:hidden;white-space:nowrap"></div>
<div class="a" style="left:968px;top:259px;width:110px;height:24px;background:#f2fcfc;color:#000;text-align:left;padding-left:4px;line-height:24px;font-size:13px;overflow:hidden;white-space:nowrap"></div>
<div class="a" style="left:1079px;top:259px;width:94px;height:24px;background:#f2fcfc;color:#000;text-align:left;padding-left:4px;line-height:24px;font-size:13px;overflow:hidden;white-space:nowrap"></div>
<div class="a" style="left:227px;top:284px;width:47px;height:24px;background:#dcede6;color:#2222c8;text-align:center;padding-left:0px;line-height:24px;font-size:13px;overflow:hidden;white-space:nowrap">6</div>
<div class="a" style="left:275px;top:284px;width:88px;height:24px;background:#ffffff;color:#000;text-align:left;padding-left:4px;line-height:24px;font-size:13px;overflow:hidden;white-space:nowrap">和贵忠</div>
<div class="a" style="left:364px;top:284px;width:64px;height:24px;background:#ffffff;color:#000;text-align:left;padding-left:4px;line-height:24px;font-size:13px;overflow:hidden;white-space:nowrap"><span style="letter-spacing:0.5px">1007</span></div>
<div class="a" style="left:429px;top:284px;width:115px;height:24px;background:#ffffff;color:#000;text-align:left;padding-left:4px;line-height:24px;font-size:13px;overflow:hidden;white-space:nowrap">开发部</div>
<div class="a" style="left:545px;top:284px;width:64px;height:24px;background:#ffffff;color:#000;text-align:left;padding-left:4px;line-height:24px;font-size:13px;overflow:hidden;white-space:nowrap"></div>
<div class="a" style="left:610px;top:284px;width:67px;height:24px;background:#ffffff;color:#000;text-align:left;padding-left:4px;line-height:24px;font-size:13px;overflow:hidden;white-space:nowrap"></div>
<div class="a" style="left:678px;top:284px;width:88px;height:24px;background:#ffffff;color:#000;text-align:left;padding-left:4px;line-height:24px;font-size:13px;overflow:hidden;white-space:nowrap"></div>
<div class="a" style="left:768px;top:284px;width:115px;height:24px;background:#ffffff;color:#000;text-align:left;padding-left:4px;line-height:24px;font-size:13px;overflow:hidden;white-space:nowrap"></div>
<div class="a" style="left:884px;top:284px;width:83px;height:24px;background:#ffffff;color:#000;text-align:left;padding-left:4px;line-height:24px;font-size:13px;overflow:hidden;white-space:nowrap"></div>
<div class="a" style="left:968px;top:284px;width:110px;height:24px;background:#ffffff;color:#000;text-align:left;padding-left:4px;line-height:24px;font-size:13px;overflow:hidden;white-space:nowrap"></div>
<div class="a" style="left:1079px;top:284px;width:94px;height:24px;background:#ffffff;color:#000;text-align:left;padding-left:4px;line-height:24px;font-size:13px;overflow:hidden;white-space:nowrap"></div>
<div class="a" style="left:227px;top:309px;width:47px;height:24px;background:#dcede6;color:#2222c8;text-align:center;padding-left:0px;line-height:24px;font-size:13px;overflow:hidden;white-space:nowrap">7</div>
<div class="a" style="left:275px;top:309px;width:88px;height:24px;background:#f2fcfc;color:#f000f0;text-align:left;padding-left:4px;line-height:24px;font-size:13px;overflow:hidden;white-space:nowrap">王立军</div>
<div class="a" style="left:364px;top:309px;width:64px;height:24px;background:#f2fcfc;color:#f000f0;text-align:left;padding-left:4px;line-height:24px;font-size:13px;overflow:hidden;white-space:nowrap"><span style="letter-spacing:0.5px">1008</span></div>
<div class="a" style="left:429px;top:309px;width:115px;height:24px;background:#f2fcfc;color:#f000f0;text-align:left;padding-left:4px;line-height:24px;font-size:13px;overflow:hidden;white-space:nowrap">开发部</div>
<div class="a" style="left:545px;top:309px;width:64px;height:24px;background:#f2fcfc;color:#f000f0;text-align:left;padding-left:4px;line-height:24px;font-size:13px;overflow:hidden;white-space:nowrap"></div>
<div class="a" style="left:610px;top:309px;width:67px;height:24px;background:#f2fcfc;color:#f000f0;text-align:left;padding-left:4px;line-height:24px;font-size:13px;overflow:hidden;white-space:nowrap"></div>
<div class="a" style="left:678px;top:309px;width:88px;height:24px;background:#f2fcfc;color:#f000f0;text-align:left;padding-left:4px;line-height:24px;font-size:13px;overflow:hidden;white-space:nowrap"></div>
<div class="a" style="left:768px;top:309px;width:115px;height:24px;background:#f2fcfc;color:#f000f0;text-align:left;padding-left:4px;line-height:24px;font-size:13px;overflow:hidden;white-space:nowrap"></div>
<div class="a" style="left:884px;top:309px;width:83px;height:24px;background:#f2fcfc;color:#f000f0;text-align:left;padding-left:4px;line-height:24px;font-size:13px;overflow:hidden;white-space:nowrap"></div>
<div class="a" style="left:968px;top:309px;width:110px;height:24px;background:#f2fcfc;color:#f000f0;text-align:left;padding-left:4px;line-height:24px;font-size:13px;overflow:hidden;white-space:nowrap"></div>
<div class="a" style="left:1079px;top:309px;width:94px;height:24px;background:#f2fcfc;color:#f000f0;text-align:left;padding-left:4px;line-height:24px;font-size:13px;overflow:hidden;white-space:nowrap"></div>
<div class="a" style="left:227px;top:334px;width:47px;height:24px;background:#dcede6;color:#2222c8;text-align:center;padding-left:0px;line-height:24px;font-size:13px;overflow:hidden;white-space:nowrap">8</div>
<div class="a" style="left:275px;top:334px;width:88px;height:24px;background:#ffffff;color:#000;text-align:left;padding-left:4px;line-height:24px;font-size:13px;overflow:hidden;white-space:nowrap">王世宏</div>
<div class="a" style="left:364px;top:334px;width:64px;height:24px;background:#ffffff;color:#000;text-align:left;padding-left:4px;line-height:24px;font-size:13px;overflow:hidden;white-space:nowrap"><span style="letter-spacing:0.5px">1009</span></div>
<div class="a" style="left:429px;top:334px;width:115px;height:24px;background:#ffffff;color:#000;text-align:left;padding-left:4px;line-height:24px;font-size:13px;overflow:hidden;white-space:nowrap">开发部</div>
<div class="a" style="left:545px;top:334px;width:64px;height:24px;background:#ffffff;color:#000;text-align:left;padding-left:4px;line-height:24px;font-size:13px;overflow:hidden;white-space:nowrap"></div>
<div class="a" style="left:610px;top:334px;width:67px;height:24px;background:#ffffff;color:#000;text-align:left;padding-left:4px;line-height:24px;font-size:13px;overflow:hidden;white-space:nowrap"></div>
<div class="a" style="left:678px;top:334px;width:88px;height:24px;background:#ffffff;color:#000;text-align:left;padding-left:4px;line-height:24px;font-size:13px;overflow:hidden;white-space:nowrap"></div>
<div class="a" style="left:768px;top:334px;width:115px;height:24px;background:#ffffff;color:#000;text-align:left;padding-left:4px;line-height:24px;font-size:13px;overflow:hidden;white-space:nowrap"></div>
<div class="a" style="left:884px;top:334px;width:83px;height:24px;background:#ffffff;color:#000;text-align:left;padding-left:4px;line-height:24px;font-size:13px;overflow:hidden;white-space:nowrap"></div>
<div class="a" style="left:968px;top:334px;width:110px;height:24px;background:#ffffff;color:#000;text-align:left;padding-left:4px;line-height:24px;font-size:13px;overflow:hidden;white-space:nowrap"></div>
<div class="a" style="left:1079px;top:334px;width:94px;height:24px;background:#ffffff;color:#000;text-align:left;padding-left:4px;line-height:24px;font-size:13px;overflow:hidden;white-space:nowrap"></div>
<div class="a" style="left:227px;top:359px;width:47px;height:24px;background:#dcede6;color:#2222c8;text-align:center;padding-left:0px;line-height:24px;font-size:13px;overflow:hidden;white-space:nowrap">9</div>
<div class="a" style="left:275px;top:359px;width:88px;height:24px;background:#f2fcfc;color:#000;text-align:left;padding-left:4px;line-height:24px;font-size:13px;overflow:hidden;white-space:nowrap">张光玉</div>
<div class="a" style="left:364px;top:359px;width:64px;height:24px;background:#f2fcfc;color:#000;text-align:left;padding-left:4px;line-height:24px;font-size:13px;overflow:hidden;white-space:nowrap"><span style="letter-spacing:0.5px">1010</span></div>
<div class="a" style="left:429px;top:359px;width:115px;height:24px;background:#f2fcfc;color:#000;text-align:left;padding-left:4px;line-height:24px;font-size:13px;overflow:hidden;white-space:nowrap">开发部</div>
<div class="a" style="left:545px;top:359px;width:64px;height:24px;background:#f2fcfc;color:#000;text-align:left;padding-left:4px;line-height:24px;font-size:13px;overflow:hidden;white-space:nowrap"></div>
<div class="a" style="left:610px;top:359px;width:67px;height:24px;background:#f2fcfc;color:#000;text-align:left;padding-left:4px;line-height:24px;font-size:13px;overflow:hidden;white-space:nowrap"></div>
<div class="a" style="left:678px;top:359px;width:88px;height:24px;background:#f2fcfc;color:#000;text-align:left;padding-left:4px;line-height:24px;font-size:13px;overflow:hidden;white-space:nowrap"></div>
<div class="a" style="left:768px;top:359px;width:115px;height:24px;background:#f2fcfc;color:#000;text-align:left;padding-left:4px;line-height:24px;font-size:13px;overflow:hidden;white-space:nowrap"></div>
<div class="a" style="left:884px;top:359px;width:83px;height:24px;background:#f2fcfc;color:#000;text-align:left;padding-left:4px;line-height:24px;font-size:13px;overflow:hidden;white-space:nowrap"></div>
<div class="a" style="left:968px;top:359px;width:110px;height:24px;background:#f2fcfc;color:#000;text-align:left;padding-left:4px;line-height:24px;font-size:13px;overflow:hidden;white-space:nowrap"></div>
<div class="a" style="left:1079px;top:359px;width:94px;height:24px;background:#f2fcfc;color:#000;text-align:left;padding-left:4px;line-height:24px;font-size:13px;overflow:hidden;white-space:nowrap"></div>
<div class="a" style="left:227px;top:384px;width:47px;height:24px;background:#dcede6;color:#2222c8;text-align:center;padding-left:0px;line-height:24px;font-size:13px;overflow:hidden;white-space:nowrap">10</div>
<div class="a" style="left:275px;top:384px;width:88px;height:24px;background:#ffffff;color:#f000f0;text-align:left;padding-left:4px;line-height:24px;font-size:13px;overflow:hidden;white-space:nowrap">潘学进</div>
<div class="a" style="left:364px;top:384px;width:64px;height:24px;background:#ffffff;color:#f000f0;text-align:left;padding-left:4px;line-height:24px;font-size:13px;overflow:hidden;white-space:nowrap"><span style="letter-spacing:0.5px">1011</span></div>
<div class="a" style="left:429px;top:384px;width:115px;height:24px;background:#ffffff;color:#f000f0;text-align:left;padding-left:4px;line-height:24px;font-size:13px;overflow:hidden;white-space:nowrap">开发部</div>
<div class="a" style="left:545px;top:384px;width:64px;height:24px;background:#ffffff;color:#f000f0;text-align:left;padding-left:4px;line-height:24px;font-size:13px;overflow:hidden;white-space:nowrap"></div>
<div class="a" style="left:610px;top:384px;width:67px;height:24px;background:#ffffff;color:#f000f0;text-align:left;padding-left:4px;line-height:24px;font-size:13px;overflow:hidden;white-space:nowrap"></div>
<div class="a" style="left:678px;top:384px;width:88px;height:24px;background:#ffffff;color:#f000f0;text-align:left;padding-left:4px;line-height:24px;font-size:13px;overflow:hidden;white-space:nowrap"></div>
<div class="a" style="left:768px;top:384px;width:115px;height:24px;background:#ffffff;color:#f000f0;text-align:left;padding-left:4px;line-height:24px;font-size:13px;overflow:hidden;white-space:nowrap"></div>
<div class="a" style="left:884px;top:384px;width:83px;height:24px;background:#ffffff;color:#f000f0;text-align:left;padding-left:4px;line-height:24px;font-size:13px;overflow:hidden;white-space:nowrap"></div>
<div class="a" style="left:968px;top:384px;width:110px;height:24px;background:#ffffff;color:#f000f0;text-align:left;padding-left:4px;line-height:24px;font-size:13px;overflow:hidden;white-space:nowrap"></div>
<div class="a" style="left:1079px;top:384px;width:94px;height:24px;background:#ffffff;color:#f000f0;text-align:left;padding-left:4px;line-height:24px;font-size:13px;overflow:hidden;white-space:nowrap"></div>
<div id="statusbar" class="a"></div>
<span class="t" style="left:20px;top:984px;font-size:12px;color:#0000c0">提示</span>
<div class="a" style="left:78px;top:980px;width:1px;height:21px;background:#c8c8c8"></div>
<span class="t" style="left:86px;top:984px;font-size:12px;color:#0000c0">当前记录数&nbsp; 10</span>
<div id="bottomline" class="a"></div>
<div id="taskarea" class="a"></div>
<span class="t" style="left:7px;top:1021px;font-size:13px;color:#1010e0">2.人力资源&nbsp; 1员工资料管</span><span class="t" style="left:162px;top:1021px;font-size:13px;color:#f010f0">3员工卡片</span>

<div class="a" style="left:476px;top:164px;width:814px;height:598px;background:#d6e3f0;border:1px solid #505050;border-radius:6px 6px 0 0"></div>
<div class="a" style="left:477px;top:165px;width:812px;height:29px;background:linear-gradient(#c4d3e3,#dbe6f1);border-radius:5px 5px 0 0"></div>
<div class="a" style="left:486px;top:175px;width:15px;height:12px;border:1px solid #606060;background:#f0f0f0"></div>
<div class="a" style="left:488px;top:177px;width:7px;height:8px;background:#4a8a5a"></div>
<span class="t" style="left:506px;top:175px;font-size:13px;color:#3c4450">员工卡片</span>
<div class="a" style="left:1249px;top:174px;width:31px;height:17px;border:1px solid #8898b0;border-radius:2px;background:linear-gradient(#d0dcea,#c4d2e2 50%,#ccd8e6)"></div>
<svg class="a" style="left:1258px;top:177px" width="13" height="11" viewBox="0 0 13 11"><path d="M3 3 L10 8 M10 3 L3 8" stroke="#404850" stroke-width="4.4" stroke-linecap="round"/><path d="M3 3 L10 8 M10 3 L3 8" stroke="#f8f8f8" stroke-width="2.2" stroke-linecap="round"/></svg>
<div class="a" style="left:484px;top:194px;width:798px;height:26px;background:#f0f0f0"></div>
<span class="t" style="left:508px;top:201px;font-size:13px">向前</span>
<span class="t" style="left:556px;top:201px;font-size:13px">向后</span>
<span class="t" style="left:603px;top:201px;font-size:13px">新增<u>A</u></span>
<span class="t" style="left:664px;top:201px;font-size:13px">保存<u>S</u></span>
<span class="t" style="left:733px;top:201px;font-size:13px">删除</span>
<span class="t" style="left:785px;top:201px;font-size:13px">备注</span>
<span class="t" style="left:838px;top:201px;font-size:13px">打印</span>
<span class="t" style="left:912px;top:201px;font-size:13px">胸卡</span>
<span class="t" style="left:985px;top:201px;font-size:13px">报告</span>
<span class="t" style="left:1032px;top:201px;font-size:13px">定制</span>
<span class="t" style="left:1081px;top:201px;font-size:13px">读卡</span>
<span class="t" style="left:1236px;top:201px;font-size:13px">返回<u>R</u></span>
<svg class="a" style="left:486px;top:203px" width="17" height="10" viewBox="0 0 17 10"><path d="M1 4 L6 1.5 H11 L12 2.5 V8 H5 L4 6 H2 Z" fill="#fff" stroke="#000" stroke-width="1.1"/><path d="M5 3.5 H9 M6 5.5 H10" stroke="#000" stroke-width=".9"/><rect x="12" y="1.5" width="4" height="7" fill="#000"/><rect x="13" y="3" width="1" height="3" fill="#00e0e0"/></svg>
<svg class="a" style="left:536px;top:203px" width="17" height="10" viewBox="0 0 17 10"><path d="M16 4 L11 1.5 H6 L5 2.5 V8 H12 L13 6 H15 Z" fill="#fff" stroke="#000" stroke-width="1.1"/><path d="M12 3.5 H8 M11 5.5 H7" stroke="#000" stroke-width=".9"/><rect x="1" y="1.5" width="4" height="7" fill="#000"/><rect x="3" y="3" width="1" height="3" fill="#00e0e0"/></svg>
<svg class="a" style="left:585px;top:200px" width="14" height="16" viewBox="0 0 14 16"><path d="M1 1 H12.5 V11 L9 14.5 H1Z" fill="#fff" stroke="#000" stroke-width="1.3"/><path d="M12.5 11 H9 V14.5" fill="none" stroke="#000" stroke-width="1"/><path d="M3 2 H6 V5 H9 V8 H6 V11 H3 V8 H0 V5 H3Z" fill="#0000ff"/><rect x="8" y="6" width="3" height="4" fill="#c0c0c0"/><rect x="3" y="11.5" width="2" height="2" fill="#00c000"/></svg>
<svg class="a" style="left:643px;top:200px" width="16" height="15" viewBox="0 0 16 15"><rect x="0.8" y="0.8" width="14.4" height="13.4" fill="#fff" stroke="#000" stroke-width="1.6"/><rect x="3" y="1" width="9" height="6" fill="#fff" stroke="#000" stroke-width="1"/><rect x="3" y="9" width="10" height="5" fill="#404040"/><rect x="5" y="10" width="1.2" height="3" fill="#fff"/><rect x="8" y="10" width="1.2" height="3" fill="#fff"/></svg>
<svg class="a" style="left:712px;top:199px" width="18" height="18" viewBox="0 0 18 18"><circle cx="9.5" cy="9.5" r="7.5" fill="#700000" opacity=".35"/><circle cx="8.5" cy="8.5" r="7.5" fill="#e80000" stroke="#a00000" stroke-width=".6"/><path d="M5.5 5.5 L11.5 11.5 M11.5 5.5 L5.5 11.5" stroke="#fff" stroke-width="2.2"/></svg>
<svg class="a" style="left:765px;top:200px" width="16" height="15" viewBox="0 0 16 15"><rect x="1" y="2" width="14" height="12" fill="#ffff60" opacity=".55"/><path d="M3 1 V12 Q3 14 5 14 H13" fill="none" stroke="#808080" stroke-width="1"/><path d="M6 6 H13 M6 9 H12 M7 6 V12" stroke="#606060" stroke-width="1"/></svg>
<svg class="a" style="left:815px;top:200px" width="18" height="16" viewBox="0 0 18 16"><path d="M6 1 H15 L13 6 H4Z" fill="#fff" stroke="#000" stroke-width="1.2"/><path d="M1 11 L4 6 H16 L17.5 9 V14 H1Z" fill="#505050" stroke="#000" stroke-width="1.2"/><rect x="2" y="10.5" width="14" height="2" fill="#909090"/><rect x="10" y="11" width="4" height="1.2" fill="#fff"/></svg>
<svg class="a" style="left:865px;top:200px" width="16" height="15" viewBox="0 0 16 15"><rect x="5" y="1" width="10" height="9" fill="#fff" stroke="#000"/><rect x="3" y="3" width="10" height="9" fill="#fff" stroke="#000"/><rect x="1" y="5" width="10" height="9" fill="#fff" stroke="#000"/><path d="M3 9 H8 M3 11 H9" stroke="#606060" stroke-width=".8"/></svg>
<svg class="a" style="left:892px;top:203px" width="16" height="10" viewBox="0 0 16 10"><rect x="0.8" y="1" width="14.4" height="8" rx="3" fill="#c8c8c8" stroke="#000" stroke-width="1.2"/><rect x="3" y="4.5" width="8" height="1.5" fill="#404040"/><rect x="12" y="3.5" width="2" height="2" fill="#e00000"/></svg>
<svg class="a" style="left:941px;top:200px" width="17" height="15" viewBox="0 0 17 15"><rect x="6" y="1" width="10" height="9" fill="#fff" stroke="#000"/><rect x="3.5" y="3" width="10" height="9" fill="#fff" stroke="#000"/><rect x="1" y="5" width="10" height="9" fill="#fff" stroke="#000"/><path d="M3 9 H8 M3 11 H9" stroke="#606060" stroke-width=".8"/></svg>
<svg class="a" style="left:965px;top:201px" width="16" height="15" viewBox="0 0 16 15"><path d="M3 2 L8 7" stroke="#a0a0a0" stroke-width="1.5"/><path d="M14 6 L8 13" stroke="#e00020" stroke-width="2.5"/><rect x="11" y="1" width="2.5" height="2.5" fill="#ff00a0"/><rect x="6" y="6" width="2.5" height="2.5" fill="#ff00a0"/><path d="M0 12 H7" stroke="#ff2020" stroke-width="1.5"/><path d="M1 14 H8" stroke="#6040a0" stroke-width="1" stroke-dasharray="1 1"/></svg>
<svg class="a" style="left:1013px;top:200px" width="13" height="15" viewBox="0 0 13 15"><rect x="0.7" y="0.7" width="11.6" height="13.6" fill="#00d8d8" stroke="#000" stroke-width="1.4"/><rect x="1.5" y="1.5" width="5" height="3" fill="#ff00ff"/><path d="M1 5 H12 M1 8.5 H12 M1 12 H12 M6.5 5 V14" stroke="#000" stroke-width="1"/></svg>
<svg class="a" style="left:1064px;top:203px" width="10" height="10" viewBox="0 0 10 10"><path d="M3.5 0.5 H6.5 V3.5 H9.5 V6.5 H6.5 V9.5 H3.5 V6.5 H0.5 V3.5 H3.5Z" fill="#202020"/></svg>
<svg class="a" style="left:1215px;top:199px" width="17" height="17" viewBox="0 0 17 17"><rect x="9" y="1" width="4" height="3" fill="#fff" stroke="#0000a0" stroke-width="1"/><rect x="9" y="5" width="6" height="11" fill="#000"/><rect x="12" y="6" width="2" height="9" fill="#808080"/><path d="M9 7 L5 10 L7 11 L4 15 H7 L9 12" fill="#000"/><path d="M1 9 H3 M0 12 H2" stroke="#000" stroke-width="1" stroke-dasharray="1 1"/></svg>
<div class="a" style="left:484px;top:220px;width:798px;height:52px;background:#f0f0f0;border-top:1px solid #646464;border-left:1px solid #646464;border-right:1px solid #646464;border-bottom:1px solid #a0a0a0"></div>
<div class="a" style="left:484px;top:272px;width:797px;height:481px;background:#f0f0f0;border-top:2px solid #646464;border-left:2px solid #646464;border-bottom:2px solid #646464;border-right:1px solid #646464"></div>
<span class="t" style="left:495px;top:230px;font-size:13px;color:#1c1c98">工号</span>
<div class="a" style="left:523px;top:223px;width:80px;height:25px;background:#fdeefd;border:1px solid #dfe4ec;border-top-color:#646464;border-radius:2px;border-left-color:#646464"></div>
<span class="t" style="left:526px;top:228px;font-size:13px;letter-spacing:0px">1001</span>
<span class="t" style="left:608px;top:230px;font-size:13px;color:#1c1c98">姓名</span>
<div class="a" style="left:637px;top:223px;width:96px;height:25px;background:#fff;border:1px solid #dfe4ec;border-top-color:#dfe4ec;border-radius:2px;"></div>
<span class="t" style="left:640px;top:228px;font-size:13px;letter-spacing:0px">周玉林</span>
<span class="t" style="left:738px;top:230px;font-size:13px;color:#1c1c98">助记码</span>
<div class="a" style="left:779px;top:223px;width:59px;height:25px;background:#fff;border:1px solid #dfe4ec;border-top-color:#dfe4ec;border-radius:2px;"></div>
<span class="t" style="left:782px;top:228px;font-size:13px;letter-spacing:0px">zyl</span>
<span class="t" style="left:843px;top:229px;font-size:13px;color:#2626b4">公司</span>
<div class="a" style="left:880px;top:223px;width:141px;height:25px;background:#fff;border:1px solid #dfe4ec;border-top-color:#dfe4ec;border-radius:2px"></div>
<div class="a" style="left:882px;top:225px;width:119px;height:20px;background:#e8f6fc"></div>
<div class="a" style="left:1008px;top:234px;width:0;height:0;border-left:4px solid transparent;border-right:4px solid transparent;border-top:4px solid #000"></div>
<span class="t" style="left:883px;top:229px;font-size:13px">本公司</span>
<span class="t" style="left:1023px;top:229px;font-size:13px;color:#2626b4">部门</span>
<div class="a" style="left:1053px;top:223px;width:120px;height:25px;background:#fff;border:1px solid #dfe4ec;border-top-color:#dfe4ec;border-radius:2px"></div>
<div class="a" style="left:1055px;top:225px;width:98px;height:20px;background:#e8f6fc"></div>
<div class="a" style="left:1160px;top:234px;width:0;height:0;border-left:4px solid transparent;border-right:4px solid transparent;border-top:4px solid #000"></div>
<span class="t" style="left:1056px;top:229px;font-size:13px">开发部</span>
<span class="t" style="left:496px;top:254px;font-size:13px;color:#1c1c98">辅助分组</span>
<div class="a" style="left:551px;top:248px;width:100px;height:23px;background:#fff;border:1px solid #dfe4ec;border-top-color:#dfe4ec;border-radius:2px"></div>
<div class="a" style="left:553px;top:250px;width:78px;height:19px;background:#e8f6fc"></div>
<div class="a" style="left:638px;top:258px;width:0;height:0;border-left:4px solid transparent;border-right:4px solid transparent;border-top:4px solid #000"></div>
<span class="t" style="left:658px;top:254px;font-size:13px;color:#901414">年龄:45</span>
<span class="t" style="left:723px;top:254px;font-size:13px;color:#901414">工龄:17年4月</span>
<span class="t" style="left:806px;top:254px;font-size:13px;color:#901414">司龄:17年4月</span>
<svg class="a" style="left:888px;top:252px" width="16" height="15" viewBox="0 0 16 15"><rect x="0.7" y="0.7" width="12.6" height="12.6" fill="#fff" stroke="#2040c0" stroke-width="1.4"/><circle cx="7" cy="5" r="2.5" fill="#208020"/><path d="M2 12 Q2 7.5 7 7.5 Q12 7.5 12 12Z" fill="#208020"/><circle cx="12.5" cy="12" r="3" fill="#40c040" stroke="#fff" stroke-width=".8"/><path d="M11 12 H14 M12.5 10.5 V13.5" stroke="#fff" stroke-width="1"/></svg>
<span class="t" style="left:910px;top:254px;font-size:13px;color:#148888">基本资料</span>
<svg class="a" style="left:958px;top:253px" width="13" height="14" viewBox="0 0 13 14"><rect x="0.7" y="0.7" width="11.6" height="12.6" fill="#fff" stroke="#000" stroke-width="1.4"/><path d="M3 7 L6 5 L9 7" fill="none" stroke="#000" stroke-width="1"/></svg>
<span class="t" style="left:977px;top:254px;font-size:13px;color:#148888">描述信息</span>
<svg class="a" style="left:1030px;top:251px" width="15" height="16" viewBox="0 0 15 16"><rect x="1" y="6" width="13" height="9" fill="#d8c840" stroke="#808000" stroke-width=".8"/><path d="M2 7 L13 14 M2 10 L9 14" stroke="#a09020" stroke-width=".6"/><path d="M3 8 L6 12 L14 2" fill="none" stroke="#e00000" stroke-width="2"/></svg>
<span class="t" style="left:1049px;top:254px;font-size:13px;color:#148888">相关文件</span>
<svg class="a" style="left:1102px;top:253px" width="13" height="14" viewBox="0 0 13 14"><rect x="0.7" y="0.7" width="11.6" height="12.6" fill="#fff" stroke="#000" stroke-width="1.4"/><path d="M3 7 L6 5 L9 7" fill="none" stroke="#000" stroke-width="1"/></svg>
<span class="t" style="left:1121px;top:254px;font-size:13px;color:#148888">分类信息</span>
<span class="t" style="left:491px;top:283px;font-size:13px;color:#1414e8">身份证号</span>
<div class="a" style="left:549px;top:276px;width:134px;height:25px;background:#fff;border:1px solid #dfe4ec;border-top-color:#dfe4ec;border-radius:2px;"></div>
<span class="t" style="left:685px;top:283px;font-size:13px;color:#1414e8">考勤卡号</span>
<div class="a" style="left:745px;top:276px;width:133px;height:25px;background:#fff;border:1px solid #dfe4ec;border-top-color:#dfe4ec;border-radius:2px;"></div>
<span class="t" style="left:748px;top:282px;font-size:13px;letter-spacing:0.6px">10011</span>
<span class="t" style="left:491px;top:308px;font-size:13px;color:#000">员工密码</span>
<div class="a" style="left:549px;top:300px;width:134px;height:26px;background:#fff;border:1px solid #dfe4ec;border-top-color:#a8a8a8;border-radius:2px;"></div>
<span class="t" style="left:685px;top:308px;font-size:13px;color:#000">确认密码</span>
<div class="a" style="left:745px;top:300px;width:133px;height:26px;background:#fff;border:1px solid #dfe4ec;border-top-color:#a8a8a8;border-radius:2px;"></div>
<span class="t" style="left:491px;top:333px;font-size:13px;color:#000">性别</span>
<div class="a" style="left:549px;top:326px;width:134px;height:25px;background:#fff;border:1px solid #dfe4ec;border-top-color:#dfe4ec;border-radius:2px"></div>
<div class="a" style="left:551px;top:328px;width:112px;height:20px;background:#e8f6fc"></div>
<div class="a" style="left:670px;top:337px;width:0;height:0;border-left:4px solid transparent;border-right:4px solid transparent;border-top:4px solid #000"></div>
<span class="t" style="left:552px;top:330px;font-size:13px">男</span>
<span class="t" style="left:685px;top:333px;font-size:13px;color:#000">出生日期</span>
<div class="a" style="left:745px;top:327px;width:132px;height:18px;background:#fff;border-top:1px solid #e4e8ee;border-left:2px solid #646464;border-right:1px solid #e4e8ee;border-bottom:1px solid #e4e8ee"></div>
<div class="a" style="left:747px;top:328px;width:129px;height:16px;overflow:hidden"><span class="t" style="left:3px;top:4px;font-size:13px;letter-spacing:1.2px;color:#000">1975年01月01日</span></div>
<span class="t" style="left:491px;top:356px;font-size:13px;color:#000">民族</span>
<div class="a" style="left:549px;top:350px;width:134px;height:25px;background:#fff;border:1px solid #dfe4ec;border-top-color:#dfe4ec;border-radius:2px"></div>
<div class="a" style="left:551px;top:352px;width:112px;height:20px;background:#e8f6fc"></div>
<div class="a" style="left:670px;top:361px;width:0;height:0;border-left:4px solid transparent;border-right:4px solid transparent;border-top:4px solid #000"></div>
<span class="t" style="left:552px;top:354px;font-size:13px">汉族</span>
<span class="t" style="left:685px;top:356px;font-size:13px;color:#000">政治面貌</span>
<div class="a" style="left:745px;top:350px;width:133px;height:25px;background:#fff;border:1px solid #dfe4ec;border-top-color:#a8a8a8;border-radius:2px"></div>
<div class="a" style="left:747px;top:352px;width:111px;height:20px;background:#e8f6fc"></div>
<div class="a" style="left:865px;top:361px;width:0;height:0;border-left:4px solid transparent;border-right:4px solid transparent;border-top:4px solid #000"></div>
<span class="t" style="left:748px;top:354px;font-size:13px">群众</span>
<span class="t" style="left:491px;top:383px;font-size:13px;color:#000">婚姻状况</span>
<div class="a" style="left:549px;top:376px;width:65px;height:20px;background:#fff;border:1px solid #dfe4ec;border-top-color:#dfe4ec;border-radius:2px"></div>
<div class="a" style="left:551px;top:378px;width:43px;height:15px;background:#e8f6fc"></div>
<div class="a" style="left:601px;top:384px;width:0;height:0;border-left:4px solid transparent;border-right:4px solid transparent;border-top:4px solid #000"></div>
<span class="t" style="left:552px;top:378px;font-size:13px">未婚</span>
<span class="t" style="left:621px;top:383px;font-size:13px;color:#000">籍贯</span>
<div class="a" style="left:649px;top:376px;width:117px;height:25px;background:#fff;border:1px solid #dfe4ec;border-top-color:#dfe4ec;border-radius:2px;"></div>
<span class="t" style="left:777px;top:383px;font-size:13px;color:#000">类别</span>
<div class="a" style="left:807px;top:376px;width:69px;height:24px;background:#fff;border:1px solid #dfe4ec;border-top-color:#dfe4ec;border-radius:2px"></div>
<div class="a" style="left:809px;top:378px;width:47px;height:19px;background:#e8f6fc"></div>
<div class="a" style="left:863px;top:386px;width:0;height:0;border-left:4px solid transparent;border-right:4px solid transparent;border-top:4px solid #000"></div>
<span class="t" style="left:491px;top:407px;font-size:13px;color:#000">家庭住址</span>
<div class="a" style="left:549px;top:400px;width:329px;height:26px;background:#fff;border:1px solid #dfe4ec;border-top-color:#a8a8a8;border-radius:2px;"></div>
<span class="t" style="left:552px;top:405px;font-size:13px;letter-spacing:0px">上城区</span>
<span class="t" style="left:491px;top:433px;font-size:13px;color:#000">档案地址</span>
<div class="a" style="left:549px;top:425px;width:134px;height:26px;background:#fff;border:1px solid #dfe4ec;border-top-color:#a8a8a8;border-radius:2px;"></div>
<span class="t" style="left:688px;top:433px;font-size:13px;color:#000">联系人</span>
<div class="a" style="left:745px;top:425px;width:133px;height:26px;background:#fff;border:1px solid #dfe4ec;border-top-color:#a8a8a8;border-radius:2px;"></div>
<span class="t" style="left:748px;top:430px;font-size:13px;letter-spacing:0px">周玉林</span>
<span class="t" style="left:491px;top:458px;font-size:13px;color:#000">工作场所</span>
<div class="a" style="left:549px;top:451px;width:134px;height:26px;background:#fff;border:1px solid #dfe4ec;border-top-color:#a8a8a8;border-radius:2px;"></div>
<span class="t" style="left:685px;top:458px;font-size:13px;color:#000">个人爱好</span>
<div class="a" style="left:745px;top:451px;width:133px;height:26px;background:#fff;border:1px solid #dfe4ec;border-top-color:#a8a8a8;border-radius:2px;"></div>
<span class="t" style="left:491px;top:484px;font-size:13px;color:#1414e8">手机</span>
<div class="a" style="left:549px;top:477px;width:134px;height:24px;background:#fff;border:1px solid #dfe4ec;border-top-color:#a8a8a8;border-radius:2px;"></div>
<span class="t" style="left:685px;top:484px;font-size:13px;color:#1414e8">工作电话</span>
<div class="a" style="left:745px;top:477px;width:133px;height:24px;background:#fff;border:1px solid #dfe4ec;border-top-color:#a8a8a8;border-radius:2px;"></div>
<span class="t" style="left:491px;top:508px;font-size:13px;color:#1414e8">EMAIL</span>
<div class="a" style="left:549px;top:500px;width:134px;height:26px;background:#fff;border:1px solid #dfe4ec;border-top-color:#a8a8a8;border-radius:2px;"></div>
<span class="t" style="left:688px;top:508px;font-size:13px;color:#1414e8">QQ 帐号</span>
<div class="a" style="left:745px;top:500px;width:133px;height:26px;background:#fff;border:1px solid #dfe4ec;border-top-color:#a8a8a8;border-radius:2px;"></div>
<span class="t" style="left:491px;top:533px;font-size:13px;color:#1414e8">微信帐号</span>
<div class="a" style="left:549px;top:525px;width:134px;height:25px;background:#fff;border:1px solid #dfe4ec;border-top-color:#a8a8a8;border-radius:2px;"></div>
<span class="t" style="left:685px;top:533px;font-size:13px;color:#1414e8">其它通信</span>
<div class="a" style="left:745px;top:525px;width:133px;height:25px;background:#fff;border:1px solid #dfe4ec;border-top-color:#a8a8a8;border-radius:2px;"></div>
<span class="t" style="left:491px;top:557px;font-size:13px;color:#1414e8">个人主页</span>
<div class="a" style="left:549px;top:550px;width:134px;height:24px;background:#fff;border:1px solid #dfe4ec;border-top-color:#a8a8a8;border-radius:2px;"></div>
<span class="t" style="left:491px;top:581px;font-size:13px;color:#1414e8">家庭电话</span>
<div class="a" style="left:549px;top:574px;width:134px;height:25px;background:#fff;border:1px solid #dfe4ec;border-top-color:#a8a8a8;border-radius:2px;"></div>
<span class="t" style="left:552px;top:579px;font-size:13px;letter-spacing:0.6px">84335171</span>
<span class="t" style="left:685px;top:581px;font-size:13px;color:#1414e8">紧急电话</span>
<div class="a" style="left:745px;top:574px;width:133px;height:25px;background:#fff;border:1px solid #dfe4ec;border-top-color:#a8a8a8;border-radius:2px;"></div>
<span class="t" style="left:748px;top:579px;font-size:13px;letter-spacing:0.6px">84335171</span>
<span class="t" style="left:491px;top:605px;font-size:13px;color:#000">实习开始</span>
<div class="a" style="left:549px;top:598px;width:134px;height:20px;background:#f6fcfd;border-top:2px solid #646464;border-left:2px solid #646464;border-right:1px solid #e4e8ee;border-bottom:1px solid #e4e8ee"></div>
<div class="a" style="left:551px;top:600px;width:131px;height:17px;overflow:hidden"><span class="t" style="left:39px;top:5px;font-size:13px;color:#000">年</span><span class="t" style="left:71px;top:5px;font-size:13px;color:#000">月</span><span class="t" style="left:103px;top:5px;font-size:13px;color:#000">日</span></div>
<span class="t" style="left:685px;top:605px;font-size:13px;color:#000">实习结束</span>
<div class="a" style="left:745px;top:598px;width:133px;height:20px;background:#f6fcfd;border-top:2px solid #646464;border-left:2px solid #646464;border-right:1px solid #e4e8ee;border-bottom:1px solid #e4e8ee"></div>
<div class="a" style="left:747px;top:600px;width:130px;height:17px;overflow:hidden"><span class="t" style="left:38px;top:5px;font-size:13px;color:#000">年</span><span class="t" style="left:70px;top:5px;font-size:13px;color:#000">月</span><span class="t" style="left:102px;top:5px;font-size:13px;color:#000">日</span></div>
<span class="t" style="left:491px;top:634px;font-size:13px;color:#1414e8">备注</span>
<div class="a" style="left:549px;top:622px;width:329px;height:123px;background:#fff;border:1px solid #b4cce6;border-radius:2px"></div>
<span class="t" style="left:884px;top:283px;font-size:13px;color:#000">学历</span>
<div class="a" style="left:942px;top:276px;width:134px;height:20px;background:#fff;border:1px solid #dfe4ec;border-top-color:#dfe4ec;border-radius:2px"></div>
<div class="a" style="left:944px;top:278px;width:112px;height:15px;background:#e8f6fc"></div>
<div class="a" style="left:1063px;top:284px;width:0;height:0;border-left:4px solid transparent;border-right:4px solid transparent;border-top:4px solid #000"></div>
<span class="t" style="left:945px;top:278px;font-size:13px">大专</span>
<span class="t" style="left:884px;top:308px;font-size:13px;color:#000">学位</span>
<div class="a" style="left:942px;top:300px;width:134px;height:20px;background:#fff;border:1px solid #dfe4ec;border-top-color:#a8a8a8;border-radius:2px"></div>
<div class="a" style="left:944px;top:302px;width:112px;height:15px;background:#e8f6fc"></div>
<div class="a" style="left:1063px;top:308px;width:0;height:0;border-left:4px solid transparent;border-right:4px solid transparent;border-top:4px solid #000"></div>
<span class="t" style="left:884px;top:332px;font-size:13px;color:#000">毕业学校</span>
<div class="a" style="left:942px;top:325px;width:134px;height:25px;background:#fff;border:1px solid #dfe4ec;border-top-color:#a8a8a8;border-radius:2px;"></div>
<span class="t" style="left:884px;top:356px;font-size:13px;color:#000">所学专业</span>
<div class="a" style="left:942px;top:349px;width:134px;height:21px;background:#fff;border:1px solid #dfe4ec;border-top-color:#a8a8a8;border-radius:2px"></div>
<div class="a" style="left:1063px;top:358px;width:0;height:0;border-left:4px solid transparent;border-right:4px solid transparent;border-top:4px solid #000"></div>
<span class="t" style="left:884px;top:382px;font-size:13px;color:#000">毕业日期</span>
<div class="a" style="left:942px;top:376px;width:134px;height:20px;background:#f6fcfd;border-top:2px solid #646464;border-left:2px solid #646464;border-right:1px solid #e4e8ee;border-bottom:1px solid #e4e8ee"></div>
<div class="a" style="left:944px;top:378px;width:131px;height:17px;overflow:hidden"><span class="t" style="left:39px;top:5px;font-size:13px;color:#000">年</span><span class="t" style="left:71px;top:5px;font-size:13px;color:#000">月</span><span class="t" style="left:103px;top:5px;font-size:13px;color:#000">日</span></div>
<span class="t" style="left:884px;top:407px;font-size:13px;color:#000">户口地址</span>
<div class="a" style="left:942px;top:400px;width:134px;height:25px;background:#fff;border:1px solid #dfe4ec;border-top-color:#a8a8a8;border-radius:2px;"></div>
<div class="a" style="left:1086px;top:277px;width:180px;height:143px;background:#fff"></div>
<span class="t" style="left:884px;top:432px;font-size:13px;color:#1c1c98">职工类别</span>
<div class="a" style="left:942px;top:426px;width:134px;height:20px;background:#fff;border:1px solid #dfe4ec;border-top-color:#a8a8a8;border-radius:2px"></div>
<div class="a" style="left:944px;top:428px;width:112px;height:15px;background:#e8f6fc"></div>
<div class="a" style="left:1063px;top:434px;width:0;height:0;border-left:4px solid transparent;border-right:4px solid transparent;border-top:4px solid #000"></div>
<span class="t" style="left:945px;top:428px;font-size:13px">合同制</span>
<span class="t" style="left:1079px;top:432px;font-size:13px;color:#1c1c98">入职日期</span>
<div class="a" style="left:1137px;top:426px;width:130px;height:20px;background:#fff;border-top:2px solid #646464;border-left:2px solid #646464;border-right:1px solid #e4e8ee;border-bottom:1px solid #e4e8ee"></div>
<div class="a" style="left:1139px;top:427px;width:127px;height:18px;overflow:hidden"><span class="t" style="left:3px;top:4px;font-size:13px;letter-spacing:1.2px;color:#000">2002年11月14日</span></div>
<span class="t" style="left:884px;top:458px;font-size:13px;color:#1c1c98">部门岗位</span>
<div class="a" style="left:942px;top:451px;width:134px;height:20px;background:#fff;border:1px solid #dfe4ec;border-top-color:#a8a8a8;border-radius:2px"></div>
<div class="a" style="left:944px;top:453px;width:112px;height:15px;background:#e8f6fc"></div>
<div class="a" style="left:1063px;top:459px;width:0;height:0;border-left:4px solid transparent;border-right:4px solid transparent;border-top:4px solid #000"></div>
<span class="t" style="left:945px;top:453px;font-size:13px">开发部经理</span>
<span class="t" style="left:1079px;top:458px;font-size:13px;color:#1c1c98">上岗日期</span>
<div class="a" style="left:1137px;top:452px;width:130px;height:19px;background:#fff;border-top:2px solid #646464;border-left:2px solid #646464;border-right:1px solid #e4e8ee;border-bottom:1px solid #e4e8ee"></div>
<div class="a" style="left:1139px;top:453px;width:127px;height:17px;overflow:hidden"><span class="t" style="left:3px;top:4px;font-size:13px;letter-spacing:1.2px;color:#000">2002年11月14日</span></div>
<span class="t" style="left:884px;top:483px;font-size:13px;color:#1c1c98">岗位级别</span>
<div class="a" style="left:942px;top:476px;width:134px;height:20px;background:#fff;border:1px solid #dfe4ec;border-top-color:#a8a8a8;border-radius:2px"></div>
<div class="a" style="left:944px;top:478px;width:112px;height:15px;background:#e8f6fc"></div>
<div class="a" style="left:1063px;top:484px;width:0;height:0;border-left:4px solid transparent;border-right:4px solid transparent;border-top:4px solid #000"></div>
<span class="t" style="left:945px;top:478px;font-size:13px">总经理</span>
<span class="t" style="left:1079px;top:483px;font-size:13px;color:#1c1c98">工作日期</span>
<div class="a" style="left:1137px;top:477px;width:130px;height:19px;background:#fff;border-top:2px solid #646464;border-left:2px solid #646464;border-right:1px solid #e4e8ee;border-bottom:1px solid #e4e8ee"></div>
<div class="a" style="left:1139px;top:478px;width:127px;height:17px;overflow:hidden"><span class="t" style="left:3px;top:4px;font-size:13px;letter-spacing:1.2px;color:#000">2002年11月14日</span></div>
<span class="t" style="left:884px;top:508px;font-size:13px;color:#1c1c98">技术职称</span>
<div class="a" style="left:942px;top:501px;width:134px;height:21px;background:#fff;border:1px solid #dfe4ec;border-top-color:#a8a8a8;border-radius:2px"></div>
<div class="a" style="left:944px;top:503px;width:112px;height:16px;background:#e8f6fc"></div>
<div class="a" style="left:1063px;top:510px;width:0;height:0;border-left:4px solid transparent;border-right:4px solid transparent;border-top:4px solid #000"></div>
<span class="t" style="left:945px;top:503px;font-size:13px">工程师</span>
<span class="t" style="left:1079px;top:508px;font-size:13px;color:#1c1c98">职称日期</span>
<div class="a" style="left:1137px;top:502px;width:130px;height:19px;background:#fff;border-top:2px solid #646464;border-left:2px solid #646464;border-right:1px solid #e4e8ee;border-bottom:1px solid #e4e8ee"></div>
<div class="a" style="left:1139px;top:503px;width:127px;height:17px;overflow:hidden"><span class="t" style="left:3px;top:4px;font-size:13px;letter-spacing:1.2px;color:#000">1992年11月14日</span></div>
<span class="t" style="left:884px;top:532px;font-size:13px;color:#1c1c98">合同开始</span>
<div class="a" style="left:942px;top:526px;width:133px;height:20px;background:#fff;border-top:2px solid #646464;border-left:2px solid #646464;border-right:1px solid #e4e8ee;border-bottom:1px solid #e4e8ee"></div>
<div class="a" style="left:944px;top:527px;width:130px;height:18px;overflow:hidden"><span class="t" style="left:3px;top:4px;font-size:13px;letter-spacing:1.2px;color:#000">2002年11月14日</span></div>
<span class="t" style="left:1079px;top:532px;font-size:13px;color:#1c1c98">合同终止</span>
<div class="a" style="left:1137px;top:527px;width:130px;height:19px;background:#fff;border-top:2px solid #646464;border-left:2px solid #646464;border-right:1px solid #e4e8ee;border-bottom:1px solid #e4e8ee"></div>
<div class="a" style="left:1139px;top:528px;width:127px;height:17px;overflow:hidden"><span class="t" style="left:3px;top:4px;font-size:13px;letter-spacing:1.2px;color:#000">2007年11月14日</span></div>
<span class="t" style="left:884px;top:557px;font-size:13px;color:#1c1c98">试用开始</span>
<div class="a" style="left:942px;top:551px;width:133px;height:20px;background:#fff;border-top:2px solid #646464;border-left:2px solid #646464;border-right:1px solid #e4e8ee;border-bottom:1px solid #e4e8ee"></div>
<div class="a" style="left:944px;top:552px;width:130px;height:18px;overflow:hidden"><span class="t" style="left:3px;top:4px;font-size:13px;letter-spacing:1.2px;color:#000">2002年08月14日</span></div>
<span class="t" style="left:1079px;top:557px;font-size:13px;color:#1c1c98">试用结束</span>
<div class="a" style="left:1137px;top:551px;width:130px;height:19px;background:#fff;border-top:2px solid #646464;border-left:2px solid #646464;border-right:1px solid #e4e8ee;border-bottom:1px solid #e4e8ee"></div>
<div class="a" style="left:1139px;top:552px;width:127px;height:17px;overflow:hidden"><span class="t" style="left:3px;top:4px;font-size:13px;letter-spacing:1.2px;color:#000">2002年11月14日</span></div>
<span class="t" style="left:884px;top:580px;font-size:13px;color:#1c1c98">合同类别</span>
<div class="a" style="left:942px;top:574px;width:134px;height:20px;background:#fff;border:1px solid #dfe4ec;border-top-color:#a8a8a8;border-radius:2px"></div>
<div class="a" style="left:944px;top:576px;width:112px;height:15px;background:#e8f6fc"></div>
<div class="a" style="left:1063px;top:582px;width:0;height:0;border-left:4px solid transparent;border-right:4px solid transparent;border-top:4px solid #000"></div>
<span class="t" style="left:1079px;top:580px;font-size:13px;color:#1c1c98">招聘来源</span>
<div class="a" style="left:1137px;top:573px;width:134px;height:21px;background:#fff;border:1px solid #dfe4ec;border-top-color:#dfe4ec;border-radius:2px"></div>
<div class="a" style="left:1139px;top:575px;width:112px;height:16px;background:#e8f6fc"></div>
<div class="a" style="left:1258px;top:582px;width:0;height:0;border-left:4px solid transparent;border-right:4px solid transparent;border-top:4px solid #000"></div>
<span class="t" style="left:884px;top:604px;font-size:13px;color:#1f8a1f">员工状态</span>
<div class="a" style="left:942px;top:597px;width:134px;height:20px;background:#fff;border:1px solid #dfe4ec;border-top-color:#a8a8a8;border-radius:2px"></div>
<div class="a" style="left:944px;top:599px;width:112px;height:15px;background:#e8f6fc"></div>
<div class="a" style="left:1063px;top:605px;width:0;height:0;border-left:4px solid transparent;border-right:4px solid transparent;border-top:4px solid #000"></div>
<span class="t" style="left:945px;top:599px;font-size:13px">合同期</span>
<span class="t" style="left:1079px;top:606px;font-size:13px;color:#1c1c98">离职时间</span>
<div class="a" style="left:1137px;top:600px;width:130px;height:19px;background:#f6fcfd;border-top:2px solid #646464;border-left:2px solid #646464;border-right:1px solid #e4e8ee;border-bottom:1px solid #e4e8ee"></div>
<div class="a" style="left:1139px;top:602px;width:127px;height:16px;overflow:hidden"><span class="t" style="left:35px;top:5px;font-size:13px;color:#a8a8a8">年</span><span class="t" style="left:67px;top:5px;font-size:13px;color:#a8a8a8">月</span><span class="t" style="left:99px;top:5px;font-size:13px;color:#a8a8a8">日</span></div>
<span class="t" style="left:884px;top:633px;font-size:13px;color:#1c1c98">离职方式</span>
<div class="a" style="left:942px;top:626px;width:134px;height:21px;background:#fff;border:1px solid #a8a8a8;border-top-color:#a8a8a8;border-radius:2px"></div>
<div class="a" style="left:944px;top:628px;width:112px;height:16px;background:#e8f6fc"></div>
<div class="a" style="left:1063px;top:635px;width:0;height:0;border-left:4px solid transparent;border-right:4px solid transparent;border-top:4px solid #a8a8a8"></div>
<span class="t" style="left:1079px;top:633px;font-size:13px;color:#1c1c98">离职原因</span>
<div class="a" style="left:1137px;top:626px;width:134px;height:26px;background:#f2f2f2;border:1px solid #a8a8a8;border-radius:3px"></div>
<div class="a" style="left:1258px;top:638px;width:0;height:0;border-left:4px solid transparent;border-right:4px solid transparent;border-top:4px solid #a8a8a8"></div>
<span class="t" style="left:884px;top:659px;font-size:13px;color:#901414">工资类别</span>
<div class="a" style="left:942px;top:652px;width:134px;height:20px;background:#fff;border:1px solid #dfe4ec;border-top-color:#dfe4ec;border-radius:2px"></div>
<div class="a" style="left:944px;top:654px;width:112px;height:15px;background:#e8f6fc"></div>
<div class="a" style="left:1063px;top:660px;width:0;height:0;border-left:4px solid transparent;border-right:4px solid transparent;border-top:4px solid #000"></div>
<span class="t" style="left:945px;top:654px;font-size:13px">在编职工类</span>
<span class="t" style="left:1079px;top:659px;font-size:13px;color:#901414">扣税标准</span>
<div class="a" style="left:1137px;top:653px;width:134px;height:20px;background:#fff;border:1px solid #dfe4ec;border-top-color:#dfe4ec;border-radius:2px"></div>
<div class="a" style="left:1139px;top:655px;width:112px;height:15px;background:#e8f6fc"></div>
<div class="a" style="left:1258px;top:661px;width:0;height:0;border-left:4px solid transparent;border-right:4px solid transparent;border-top:4px solid #000"></div>
<span class="t" style="left:1140px;top:655px;font-size:13px">1600起征</span>
<span class="t" style="left:884px;top:683px;font-size:13px;color:#901414">开户银行</span>
<div class="a" style="left:942px;top:677px;width:134px;height:20px;background:#fff;border:1px solid #dfe4ec;border-top-color:#a8a8a8;border-radius:2px"></div>
<div class="a" style="left:944px;top:679px;width:112px;height:15px;background:#e8f6fc"></div>
<div class="a" style="left:1063px;top:685px;width:0;height:0;border-left:4px solid transparent;border-right:4px solid transparent;border-top:4px solid #000"></div>
<span class="t" style="left:1079px;top:683px;font-size:13px;color:#901414">工资账号</span>
<div class="a" style="left:1137px;top:677px;width:134px;height:25px;background:#fff;border:1px solid #dfe4ec;border-top-color:#a8a8a8;border-radius:2px;"></div>
<span class="t" style="left:884px;top:708px;font-size:13px;color:#901414">养老帐号</span>
<div class="a" style="left:942px;top:701px;width:134px;height:25px;background:#fff;border:1px solid #dfe4ec;border-top-color:#a8a8a8;border-radius:2px;"></div>
<span class="t" style="left:1079px;top:708px;font-size:13px;color:#901414">医保帐号</span>
<div class="a" style="left:1137px;top:701px;width:134px;height:25px;background:#fff;border:1px solid #dfe4ec;border-top-color:#a8a8a8;border-radius:2px;"></div>
<span class="t" style="left:884px;top:733px;font-size:13px;color:#901414">失业帐号</span>
<div class="a" style="left:942px;top:725px;width:134px;height:26px;background:#fff;border:1px solid #dfe4ec;border-top-color:#a8a8a8;border-radius:2px;"></div>
<span class="t" style="left:1079px;top:733px;font-size:13px;color:#901414">公积帐号</span>
<div class="a" style="left:1137px;top:725px;width:134px;height:26px;background:#fff;border:1px solid #dfe4ec;border-top-color:#a8a8a8;border-radius:2px;"></div>
<div class="a" style="left:485px;top:752px;width:796px;height:2px;background:#fff"></div>
<div class="a" style="left:848px;top:179px;width:35px;height:74px;border:3px solid #f03838;border-radius:50%"></div>
<div class="a" style="left:64px;top:749px;width:33px;height:128px;border:3px solid #f03838;border-radius:50%"></div>
</body></html>
